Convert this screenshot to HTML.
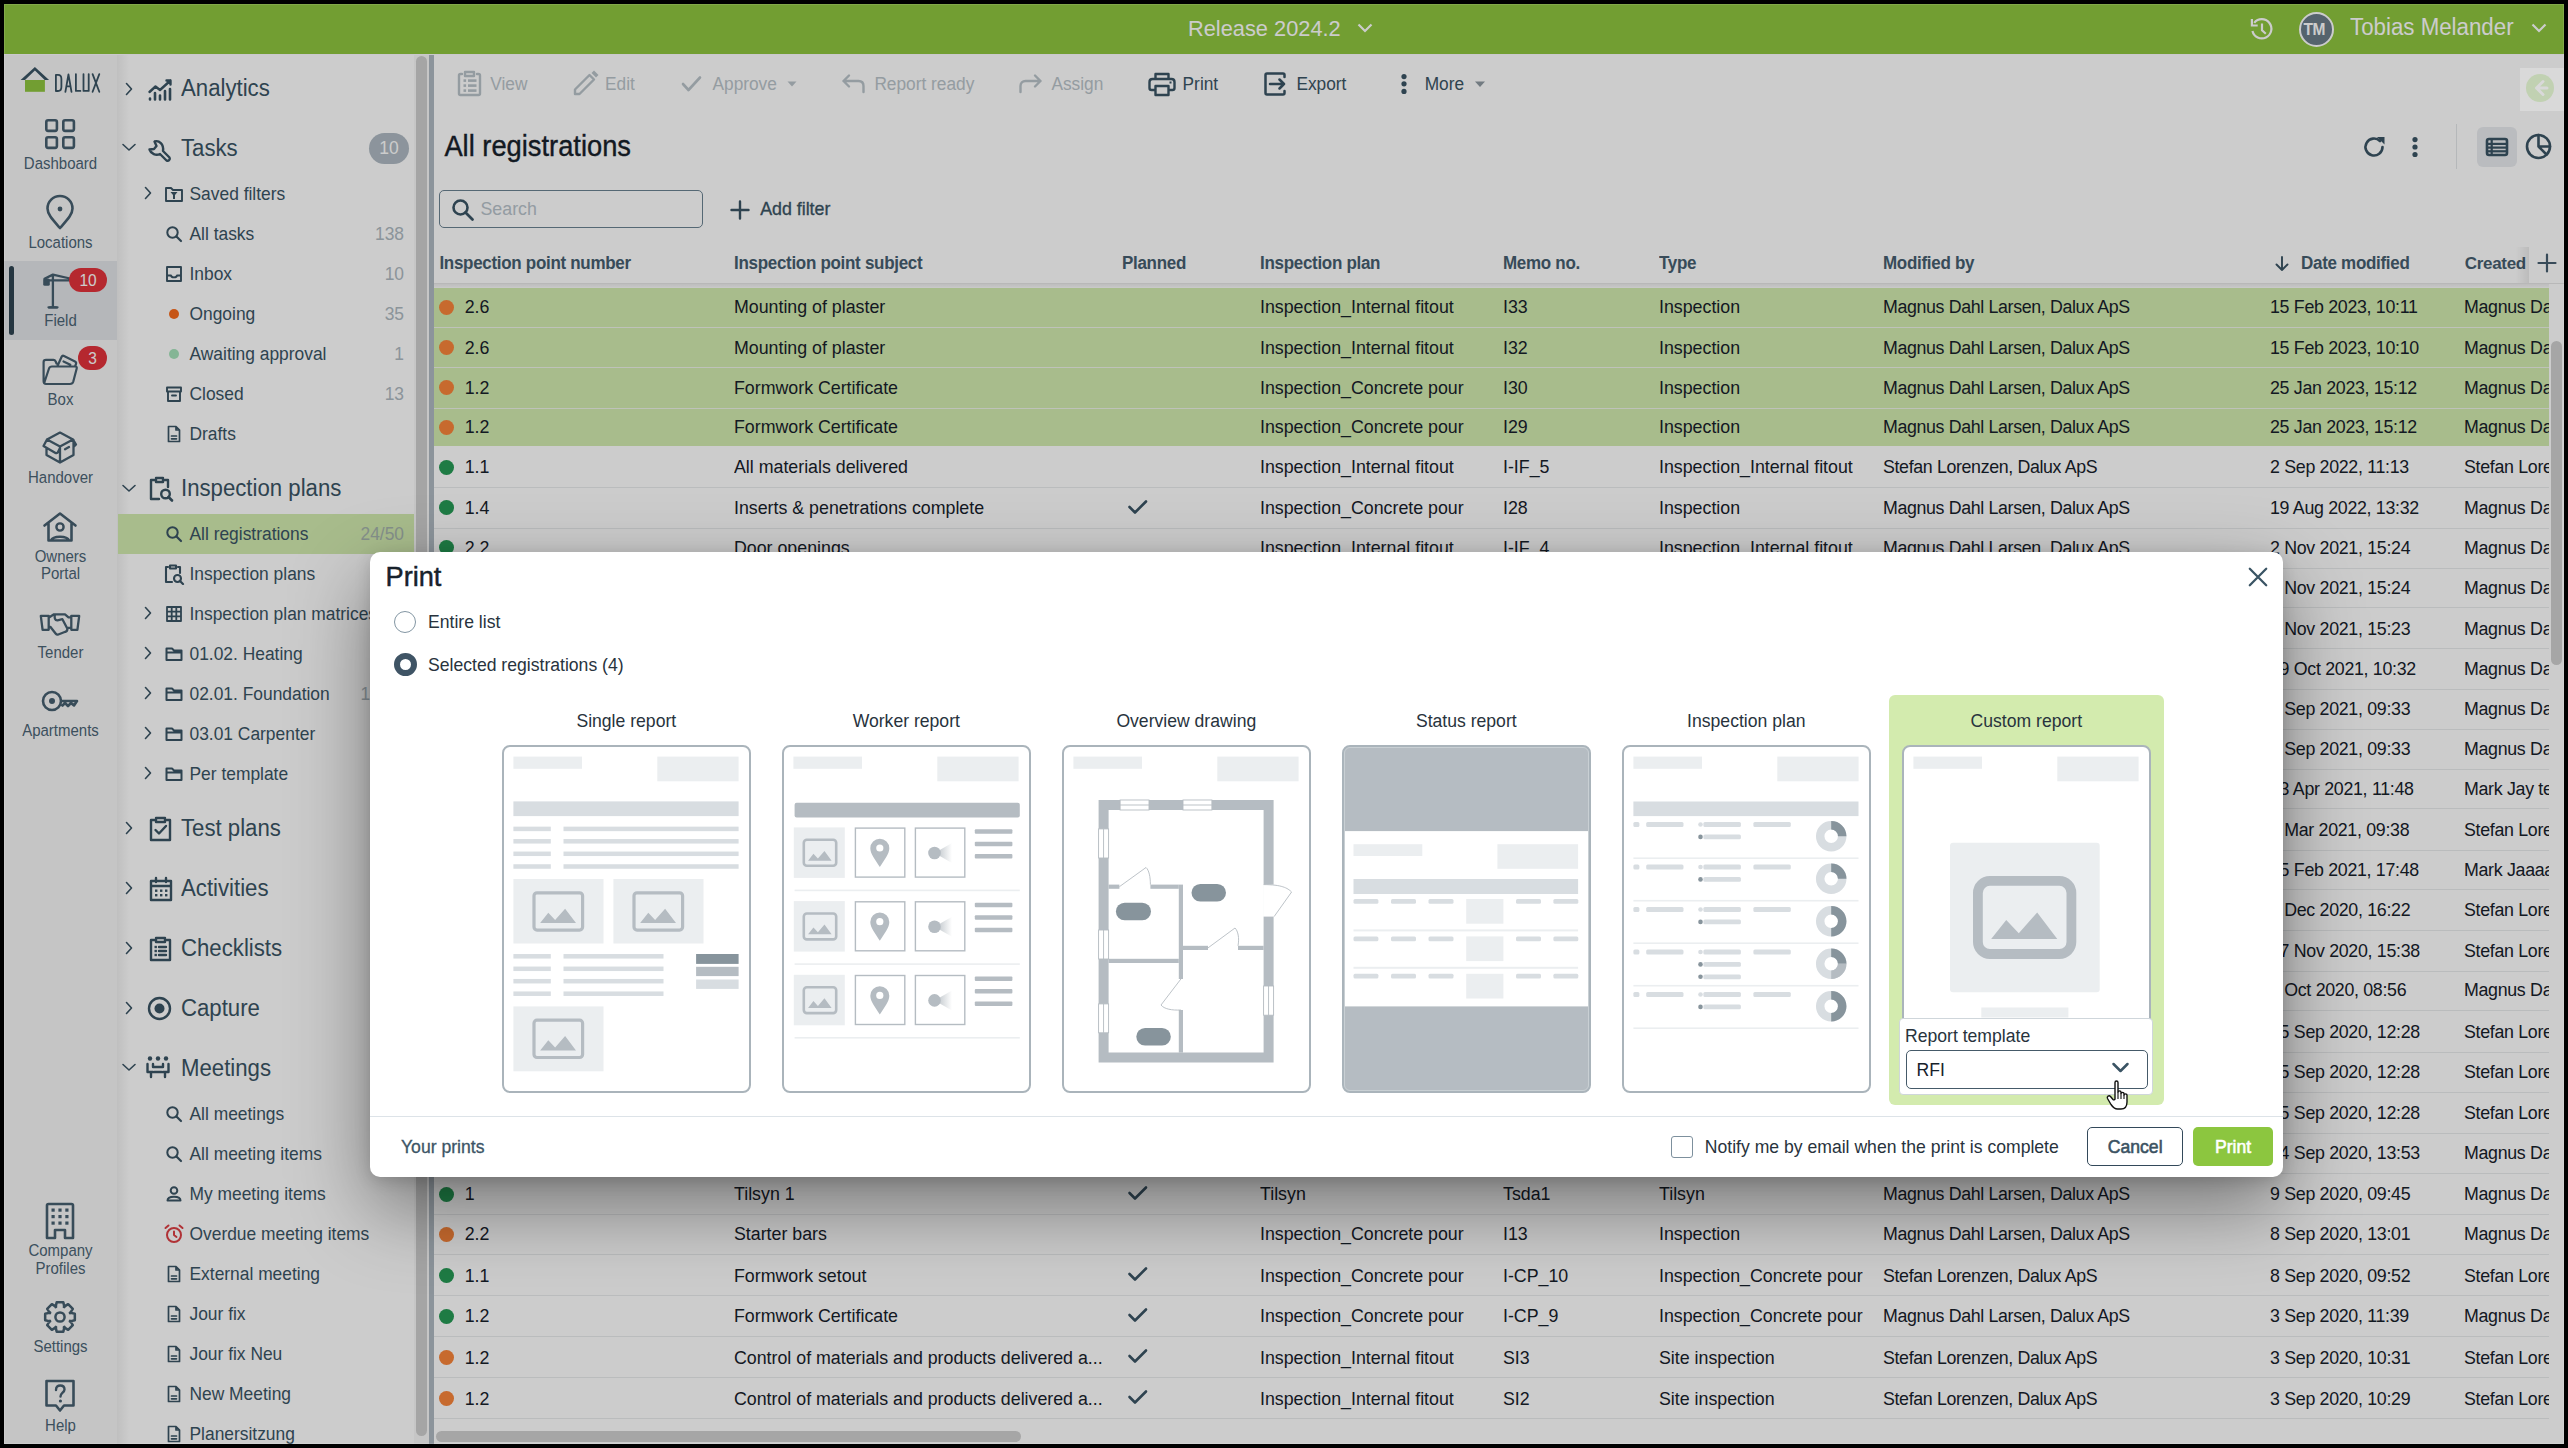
<!DOCTYPE html>
<html><head><meta charset="utf-8"><style>
html,body{margin:0;padding:0;}
body{width:2568px;height:1448px;background:#000;position:relative;overflow:hidden;font-family:"Liberation Sans",sans-serif;}
.t{position:absolute;white-space:nowrap;line-height:1;}
.r{position:absolute;}
#clip{position:absolute;left:4px;top:4px;width:2560px;height:1440px;overflow:hidden;}
</style></head><body>
<div class="r" style="left:4.00px;top:4.00px;width:2560.00px;height:50.00px;background:#8fc63f;"></div>
<div class="r" style="left:4.00px;top:54.00px;width:2560.00px;height:1.00px;background:#fdfcff;"></div>
<div class="t" style="left:1188.00px;top:17.65px;font-size:21.8px;color:#ffffff;transform:scaleY(1.05);transform-origin:0 18.45px;">Release 2024.2</div>
<svg class="r" style="left:1357.00px;top:23.00px;" width="16" height="11" viewBox="0 0 16 11"><path d="M1.5 1.5 L8 8 L14.5 1.5" fill="none" stroke="#fff" stroke-width="2.2"/></svg>
<svg class="r" style="left:2240.00px;top:10.00px;" width="50" height="40" viewBox="0 0 50 40"><path d="M12.45 20.96 A9.6 9.6 0 1 0 14.24 12.89" fill="none" stroke="#fff" stroke-width="2.2"/><path d="M11.9 9.1 V15.5 H17.7" fill="none" stroke="#fff" stroke-width="2.2"/><path d="M22 13.6 V20.2 L25.8 23.7" fill="none" stroke="#fff" stroke-width="2.2"/></svg>
<div class="r" style="left:2299px;top:12px;width:31px;height:31px;border-radius:50%;background:#6b7c89;border:2px solid #fff;"></div>
<div class="t" style="left:2303.50px;top:22.08px;font-size:15.5px;color:#fff;font-weight:700;transform:scaleY(1.05);transform-origin:0 13.12px;letter-spacing:-0.5px;">TM</div>
<div class="t" style="left:2350.00px;top:17.32px;font-size:22.3px;color:#fff;transform:scaleY(1.05);transform-origin:0 18.88px;">Tobias Melander</div>
<svg class="r" style="left:2531.00px;top:23.00px;" width="16" height="11" viewBox="0 0 16 11"><path d="M1.5 1.5 L8 8 L14.5 1.5" fill="none" stroke="#fff" stroke-width="2.2"/></svg>
<div class="r" style="left:4.00px;top:55.00px;width:113.00px;height:1389.00px;background:#f7f7f7;"></div>
<div class="r" style="left:117.00px;top:55.00px;width:297.00px;height:1389.00px;background:#ffffff;"></div>
<div class="r" style="left:117.00px;top:55.00px;width:12.00px;height:1389.00px;background:linear-gradient(to right, rgba(0,0,0,0.06), rgba(0,0,0,0));"></div>
<div class="r" style="left:414.00px;top:55.00px;width:15.00px;height:1389.00px;background:#f8f8f8;"></div>
<div class="r" style="left:416.00px;top:56.00px;width:11.00px;height:1380.00px;background:#cfcfcf;border-radius:6px;"></div>
<div class="r" style="left:429.00px;top:55.00px;width:5.00px;height:1389.00px;background:#afb9c2;"></div>
<div class="r" style="left:434.00px;top:55.00px;width:2130.00px;height:1389.00px;background:#ffffff;"></div>
<svg class="r" style="left:0.00px;top:0.00px;" width="120" height="100" viewBox="0 0 120 100"><path d="M20.6 80 L34.9 67 L49.1 80 H44.7 L34.9 70.6 L25 80 Z" fill="#3a5464"/><rect x="25" y="80" width="19.9" height="11.8" fill="#8fc63f"/><path d="M55.9 74.9 V91 H58 C60.5 91 61.4 89.5 61.4 87 V79 C61.4 76.5 60.5 74.9 58 74.9 Z M65.4 91.8 L68.45 74.3 L71.5 91.8 M66.4 86.4 H70.5 M75.9 74.1 V90.9 H80.4 M83.5 74.1 V90.9 H88.7 V74.1 M92.6 74.1 L99.3 91.8 M99.3 74.1 L92.6 91.8" fill="none" stroke="#3a5464" stroke-width="1.8" stroke-linecap="round" stroke-linejoin="round" stroke-linecap="butt" stroke-linejoin="miter"/></svg>
<svg class="r" style="left:40.00px;top:114.00px;" width="40" height="40" viewBox="0 0 40 40"><rect x="6.3" y="6.3" width="10.6" height="10.6" rx="1.8" fill="none" stroke="#465f70" stroke-width="2.6"/><rect x="6.3" y="23.3" width="10.6" height="10.6" rx="1.8" fill="none" stroke="#465f70" stroke-width="2.6"/><rect x="23.3" y="6.3" width="10.6" height="10.6" rx="1.8" fill="none" stroke="#465f70" stroke-width="2.6"/><rect x="23.3" y="23.3" width="10.6" height="10.6" rx="1.8" fill="none" stroke="#465f70" stroke-width="2.6"/></svg>
<div class="t" style="left:-439.50px;width:1000px;text-align:center;top:155.50px;font-size:15px;color:#4b6475;transform:scaleY(1.05);transform-origin:0 12.70px;">Dashboard</div>
<svg class="r" style="left:40.00px;top:192.00px;" width="40" height="40" viewBox="0 0 40 40"><path d="M20 36 C13 28 7.5 22.5 7.5 16.5 A12.5 12.5 0 0 1 32.5 16.5 C32.5 22.5 27 28 20 36 Z" fill="none" stroke="#465f70" stroke-width="2.6" stroke-linecap="round" stroke-linejoin="round" /><circle cx="20" cy="17" r="2.4" fill="#465f70"/></svg>
<div class="t" style="left:-439.50px;width:1000px;text-align:center;top:235.40px;font-size:15px;color:#4b6475;transform:scaleY(1.05);transform-origin:0 12.70px;">Locations</div>
<div class="r" style="left:4.00px;top:261.00px;width:113.00px;height:79.00px;background:#e3e5e9;"></div>
<div class="r" style="left:9.00px;top:266.00px;width:5.00px;height:69.00px;background:#2f4452;border-radius:3px;"></div>
<svg class="r" style="left:36.00px;top:264.00px;" width="50" height="50" viewBox="0 0 50 50"><path d="M16.9 11 V42.8 M12.5 43.3 H21.5 M9.5 16.3 H34 M8.5 14.8 L16.9 10.6 L34 14.5" fill="none" stroke="#465f70" stroke-width="2.3" stroke-linecap="round" stroke-linejoin="round" stroke-linecap="butt"/><rect x="7.2" y="14.5" width="6.6" height="7.3" rx="1.6" fill="#465f70"/><path d="M12.3 44.6 L13.5 42.3 H20.5 L21.7 44.6 Z" fill="#465f70"/></svg>
<div class="r" style="left:69.00px;top:268.00px;width:38.00px;height:24.00px;background:#e3323b;border-radius:12px;"></div>
<div class="t" style="left:-412.00px;width:1000px;text-align:center;top:273.18px;font-size:15.5px;color:#fff;transform:scaleY(1.05);transform-origin:0 13.12px;">10</div>
<div class="t" style="left:-439.50px;width:1000px;text-align:center;top:313.40px;font-size:15px;color:#4b6475;transform:scaleY(1.05);transform-origin:0 12.70px;">Field</div>
<svg class="r" style="left:36.00px;top:340.00px;" width="50" height="50" viewBox="0 0 50 50"><path d="M8.2 43 L13 28.5 C13.5 27 14.5 26.5 16 26.5 H39.5 C40.5 26.5 41 27.5 40.7 28.5 L37.3 41.5 C36.8 43.2 35.8 44 34 44 H10 C8.5 44 7.6 43 7.6 41 V22 C7.6 20.6 8.5 19.8 10 19.8 H17.5 C18.5 19.8 19.2 20.5 19.7 21.5 L20.5 23.5 M21.5 26 L25.5 17 C26 16 27 15.5 28 16 L39 21.5 C40 22 40.3 23 40 24 L39.2 26 M27.5 21.5 L34.3 24.8" fill="none" stroke="#465f70" stroke-width="2.2" stroke-linecap="round" stroke-linejoin="round" /></svg>
<div class="r" style="left:78.00px;top:346.00px;width:29.00px;height:24.00px;background:#e3323b;border-radius:12px;"></div>
<div class="t" style="left:-407.50px;width:1000px;text-align:center;top:351.18px;font-size:15.5px;color:#fff;transform:scaleY(1.05);transform-origin:0 13.12px;">3</div>
<div class="t" style="left:-439.50px;width:1000px;text-align:center;top:392.40px;font-size:15px;color:#4b6475;transform:scaleY(1.05);transform-origin:0 12.70px;">Box</div>
<svg class="r" style="left:36.00px;top:420.00px;" width="50" height="50" viewBox="0 0 50 50"><path d="M24 12.6 L37 19.5 L24 26.5 L11 19.5 Z M11 19.5 L7.5 26 L19.5 33 C20.5 33.5 21.5 33 22 32 L24 28 M10.5 28.5 V35 L24 42.5 L37.5 35 V20 M37 19.5 L40 24.5 L37.5 27 M24 26.5 V42.5 M29 29.3 L33 27" fill="none" stroke="#465f70" stroke-width="2.3" stroke-linecap="round" stroke-linejoin="round" /></svg>
<div class="t" style="left:-439.50px;width:1000px;text-align:center;top:470.40px;font-size:15px;color:#4b6475;transform:scaleY(1.05);transform-origin:0 12.70px;">Handover</div>
<svg class="r" style="left:40.00px;top:508.00px;" width="40" height="40" viewBox="0 0 40 40"><path d="M4.5 17.5 L20 5.5 L35.5 17.5 M8.5 15 V32.5 H31.5 V15 M11 32.5 C13 27.5 27 27.5 29 32.5" fill="none" stroke="#465f70" stroke-width="2.6" stroke-linecap="round" stroke-linejoin="round" /><circle cx="20" cy="19" r="3.6" fill="none" stroke="#465f70" stroke-width="2.4"/></svg>
<div class="t" style="left:-439.50px;width:1000px;text-align:center;top:549.10px;font-size:15px;color:#4b6475;transform:scaleY(1.05);transform-origin:0 12.70px;">Owners</div>
<div class="t" style="left:-439.50px;width:1000px;text-align:center;top:565.90px;font-size:15px;color:#4b6475;transform:scaleY(1.05);transform-origin:0 12.70px;">Portal</div>
<svg class="r" style="left:36.00px;top:600.00px;" width="50" height="50" viewBox="0 0 50 50"><path d="M4.8 15.8 H12.7 V29.8 H6.6 Z M43.2 15.8 H35.3 V29.8 H41.4 Z M13 17.5 L18 14.3 H29 L32.5 17.3 H35 M18.8 15.5 C18.3 17.5 18.8 20.5 21.5 20.3 L26.4 19.2 L31.3 28.5 C31.6 30 30.8 31.3 29.3 31.8 L22.3 34.5 C21.3 34.9 20.5 34.7 19.8 33.8 L14.3 26.8 H13 M31 27.8 H35" fill="none" stroke="#465f70" stroke-width="2.3" stroke-linecap="round" stroke-linejoin="round" /></svg>
<div class="t" style="left:-439.50px;width:1000px;text-align:center;top:645.20px;font-size:15px;color:#4b6475;transform:scaleY(1.05);transform-origin:0 12.70px;">Tender</div>
<svg class="r" style="left:38.00px;top:686.00px;" width="44" height="30" viewBox="0 0 44 30"><path d="M14 15 m-9 0 a9 9 0 1 0 18 0 a9 9 0 1 0 -18 0 M23 15 H39 L36 19.5 L33 17 L30 20 L27 17 L24.5 19.5" fill="none" stroke="#465f70" stroke-width="2.6" stroke-linecap="round" stroke-linejoin="round" /><circle cx="14" cy="15" r="3" fill="#465f70"/></svg>
<div class="t" style="left:-439.50px;width:1000px;text-align:center;top:723.40px;font-size:15px;color:#4b6475;transform:scaleY(1.05);transform-origin:0 12.70px;">Apartments</div>
<svg class="r" style="left:40.00px;top:1200.00px;" width="40" height="42" viewBox="0 0 40 42"><path d="M7 38 V5.5 C7 4.5 7.5 4 8.5 4 H31.5 C32.5 4 33 4.5 33 5.5 V38 H25 V30 H15 V38 Z" fill="none" stroke="#465f70" stroke-width="2.6" stroke-linecap="round" stroke-linejoin="round" /><rect x="11.5" y="8.5" width="3.2" height="3.2" fill="#465f70"/><rect x="11.5" y="15" width="3.2" height="3.2" fill="#465f70"/><rect x="11.5" y="21.5" width="3.2" height="3.2" fill="#465f70"/><rect x="18.4" y="8.5" width="3.2" height="3.2" fill="#465f70"/><rect x="18.4" y="15" width="3.2" height="3.2" fill="#465f70"/><rect x="18.4" y="21.5" width="3.2" height="3.2" fill="#465f70"/><rect x="25.3" y="8.5" width="3.2" height="3.2" fill="#465f70"/><rect x="25.3" y="15" width="3.2" height="3.2" fill="#465f70"/><rect x="25.3" y="21.5" width="3.2" height="3.2" fill="#465f70"/></svg>
<div class="t" style="left:-439.50px;width:1000px;text-align:center;top:1243.40px;font-size:15px;color:#4b6475;transform:scaleY(1.05);transform-origin:0 12.70px;">Company</div>
<div class="t" style="left:-439.50px;width:1000px;text-align:center;top:1260.90px;font-size:15px;color:#4b6475;transform:scaleY(1.05);transform-origin:0 12.70px;">Profiles</div>
<svg class="r" style="left:40.00px;top:1297.00px;" width="40" height="40" viewBox="0 0 40 40"><path d="M34.83 16.68 L34.83 23.32 L29.86 24.40 L30.09 23.86 L32.83 28.14 L28.14 32.83 L23.86 30.09 L24.40 29.86 L23.32 34.83 L16.68 34.83 L15.60 29.86 L16.14 30.09 L11.86 32.83 L7.17 28.14 L9.91 23.86 L10.14 24.40 L5.17 23.32 L5.17 16.68 L10.14 15.60 L9.91 16.14 L7.17 11.86 L11.86 7.17 L16.14 9.91 L15.60 10.14 L16.68 5.17 L23.32 5.17 L24.40 10.14 L23.86 9.91 L28.14 7.17 L32.83 11.86 L30.09 16.14 L29.86 15.60 Z" fill="none" stroke="#465f70" stroke-width="2.5" stroke-linecap="round" stroke-linejoin="round" /><circle cx="20" cy="20" r="4.6" fill="none" stroke="#465f70" stroke-width="2.5"/></svg>
<div class="t" style="left:-439.50px;width:1000px;text-align:center;top:1339.20px;font-size:15px;color:#4b6475;transform:scaleY(1.05);transform-origin:0 12.70px;">Settings</div>
<svg class="r" style="left:40.00px;top:1376.00px;" width="40" height="40" viewBox="0 0 40 40"><path d="M6.5 5 H33.5 V29.5 H24 L20 34.5 L16 29.5 H6.5 Z" fill="none" stroke="#465f70" stroke-width="2.6" stroke-linecap="round" stroke-linejoin="round" /><path d="M16 14 C16 10.5 18 9.5 20.2 9.5 C22.8 9.5 24.5 11.2 24.5 13.5 C24.5 16.5 20.5 17 20.5 20.5" fill="none" stroke="#465f70" stroke-width="2.4" stroke-linecap="round" stroke-linejoin="round" /><circle cx="20.4" cy="25" r="1.6" fill="#465f70"/></svg>
<div class="t" style="left:-439.50px;width:1000px;text-align:center;top:1418.40px;font-size:15px;color:#4b6475;transform:scaleY(1.05);transform-origin:0 12.70px;">Help</div>
<svg class="r" style="left:123.00px;top:80.50px;" width="12" height="16" viewBox="0 0 12 16"><path d="M3.5 2.5 L8.5 8 L3.5 13.5" fill="none" stroke="#3a5464" stroke-width="1.6" stroke-linecap="round" stroke-linejoin="round" /></svg>
<svg class="r" style="left:146.00px;top:78.00px;" width="28" height="24" viewBox="0 0 28 24"><path d="M3.5 14 L9.5 8.5 L14 12 L24.5 2.5 M20.5 2.5 H24.5 V6.5" fill="none" stroke="#3a5464" stroke-width="2.4" stroke-linecap="round" stroke-linejoin="round" /><path d="M4 21.5 V20.5 M9 21.5 V15 M14 21.5 V17.5 M19 21.5 V13 M24 21.5 V11" fill="none" stroke="#3a5464" stroke-width="2.6" stroke-linecap="round" stroke-linejoin="round" stroke-linecap="butt"/></svg>
<div class="t" style="left:181.00px;top:78.41px;font-size:22.2px;color:#3a5464;transform:scaleY(1.05);transform-origin:0 18.79px;">Analytics</div>
<svg class="r" style="left:120.50px;top:142.00px;" width="16" height="10" viewBox="0 0 16 10"><path d="M2 2.5 L8 8 L14 2.5" fill="none" stroke="#3a5464" stroke-width="1.6" stroke-linecap="round" stroke-linejoin="round" /></svg>
<svg class="r" style="left:146.00px;top:135.00px;" width="28" height="28" viewBox="0 0 28 28"><path d="M17 16 L23.5 22.5 A2.2 2.2 0 0 1 20.5 25.5 L14 19 C10 21 5 19 3.5 14.5 L8 14 L10.5 11 L8.5 6.5 C13 5 18 9 17 16 Z" fill="none" stroke="#3a5464" stroke-width="2.4" stroke-linecap="round" stroke-linejoin="round" /></svg>
<div class="t" style="left:181.00px;top:137.81px;font-size:22.2px;color:#3a5464;transform:scaleY(1.05);transform-origin:0 18.79px;">Tasks</div>
<div class="r" style="left:369.00px;top:133.00px;width:40.00px;height:31.00px;background:#afbac3;border-radius:16px;"></div>
<div class="t" style="left:-111.00px;width:1000px;text-align:center;top:140.39px;font-size:17.5px;color:#fff;transform:scaleY(1.05);transform-origin:0 14.81px;">10</div>
<svg class="r" style="left:141.50px;top:185.30px;" width="12" height="16" viewBox="0 0 12 16"><path d="M3.5 2.5 L8.5 8 L3.5 13.5" fill="none" stroke="#3a5464" stroke-width="1.6" stroke-linecap="round" stroke-linejoin="round" /></svg>
<svg class="r" style="left:163.00px;top:184.80px;" width="22" height="18" viewBox="0 0 22 18"><path d="M3 3 H8 L10 5 H19 V16 H3 Z" fill="none" stroke="#3a5464" stroke-width="1.9" stroke-linecap="round" stroke-linejoin="round" /><path d="M7.5 7 H14.5 L12 10 V14 H10 V10 Z" fill="#3a5464"/></svg>
<div class="t" style="left:189.50px;top:185.97px;font-size:17.4px;color:#3a5464;transform:scaleY(1.05);transform-origin:0 14.73px;">Saved filters</div>
<svg class="r" style="left:164.00px;top:224.80px;" width="20" height="18" viewBox="0 0 20 18"><circle cx="8.5" cy="7.5" r="5.2" fill="none" stroke="#3a5464" stroke-width="2.0"/><path d="M12.5 11.5 L17 16" fill="none" stroke="#3a5464" stroke-width="2.2" stroke-linecap="round" stroke-linejoin="round" /></svg>
<div class="t" style="left:189.50px;top:225.97px;font-size:17.4px;color:#3a5464;transform:scaleY(1.05);transform-origin:0 14.73px;">All tasks</div>
<div class="t" style="right:2164.00px;top:225.97px;font-size:17.4px;color:#aeb9c1;transform:scaleY(1.05);transform-origin:0 14.73px;">138</div>
<svg class="r" style="left:164.00px;top:264.80px;" width="20" height="18" viewBox="0 0 20 18"><path d="M3 2 H17 V16 H3 Z M3 10.5 H7 C7.5 13 12.5 13 13 10.5 H17" fill="none" stroke="#3a5464" stroke-width="1.9" stroke-linecap="round" stroke-linejoin="round" stroke-linejoin="round"/></svg>
<div class="t" style="left:189.50px;top:265.97px;font-size:17.4px;color:#3a5464;transform:scaleY(1.05);transform-origin:0 14.73px;">Inbox</div>
<div class="t" style="right:2164.00px;top:265.97px;font-size:17.4px;color:#aeb9c1;transform:scaleY(1.05);transform-origin:0 14.73px;">10</div>
<div class="r" style="left:168.8px;top:308.7px;width:10.4px;height:10.4px;border-radius:50%;background:#f86b1c;"></div>
<div class="t" style="left:189.50px;top:305.97px;font-size:17.4px;color:#3a5464;transform:scaleY(1.05);transform-origin:0 14.73px;">Ongoing</div>
<div class="t" style="right:2164.00px;top:305.97px;font-size:17.4px;color:#aeb9c1;transform:scaleY(1.05);transform-origin:0 14.73px;">35</div>
<div class="r" style="left:168.8px;top:348.7px;width:10.4px;height:10.4px;border-radius:50%;background:#a5e3bb;"></div>
<div class="t" style="left:189.50px;top:345.97px;font-size:17.4px;color:#3a5464;transform:scaleY(1.05);transform-origin:0 14.73px;">Awaiting approval</div>
<div class="t" style="right:2164.00px;top:345.97px;font-size:17.4px;color:#aeb9c1;transform:scaleY(1.05);transform-origin:0 14.73px;">1</div>
<svg class="r" style="left:164.00px;top:384.80px;" width="20" height="18" viewBox="0 0 20 18"><path d="M3 2.5 H17 V6.5 H3 Z M4 6.5 V16 H16 V6.5 M8 10.5 H12" fill="none" stroke="#3a5464" stroke-width="1.9" stroke-linecap="round" stroke-linejoin="round" /></svg>
<div class="t" style="left:189.50px;top:385.97px;font-size:17.4px;color:#3a5464;transform:scaleY(1.05);transform-origin:0 14.73px;">Closed</div>
<div class="t" style="right:2164.00px;top:385.97px;font-size:17.4px;color:#aeb9c1;transform:scaleY(1.05);transform-origin:0 14.73px;">13</div>
<svg class="r" style="left:164.00px;top:423.80px;" width="20" height="20" viewBox="0 0 20 20"><path d="M4.5 2.5 H12 L15.5 6 V17.5 H4.5 Z M12 2.5 V6 H15.5 M7.5 12 H12.5 M7.5 14.8 H12.5" fill="none" stroke="#3a5464" stroke-width="1.7" stroke-linecap="round" stroke-linejoin="round" /></svg>
<div class="t" style="left:189.50px;top:425.97px;font-size:17.4px;color:#3a5464;transform:scaleY(1.05);transform-origin:0 14.73px;">Drafts</div>
<svg class="r" style="left:120.50px;top:483.00px;" width="16" height="10" viewBox="0 0 16 10"><path d="M2 2.5 L8 8 L14 2.5" fill="none" stroke="#3a5464" stroke-width="1.6" stroke-linecap="round" stroke-linejoin="round" /></svg>
<svg class="r" style="left:146.00px;top:475.00px;" width="30" height="28" viewBox="0 0 30 28"><path d="M8 5 H5 V24 H13 M19 5 H22 V12 M10 3 H17 V7 H10 Z" fill="none" stroke="#3a5464" stroke-width="2.4" stroke-linecap="round" stroke-linejoin="round" stroke-linejoin="miter"/><circle cx="19.5" cy="19" r="4.3" fill="none" stroke="#3a5464" stroke-width="2.4"/><path d="M22.5 22 L26 25.5" fill="none" stroke="#3a5464" stroke-width="2.6" stroke-linecap="round" stroke-linejoin="round" /></svg>
<div class="t" style="left:181.00px;top:478.11px;font-size:22.2px;color:#3a5464;transform:scaleY(1.05);transform-origin:0 18.79px;">Inspection plans</div>
<div class="r" style="left:117.50px;top:514.00px;width:296.50px;height:39.70px;background:#d3ebb0;"></div>
<svg class="r" style="left:164.00px;top:524.80px;" width="20" height="18" viewBox="0 0 20 18"><circle cx="8.5" cy="7.5" r="5.2" fill="none" stroke="#3a5464" stroke-width="2.0"/><path d="M12.5 11.5 L17 16" fill="none" stroke="#3a5464" stroke-width="2.2" stroke-linecap="round" stroke-linejoin="round" /></svg>
<div class="t" style="left:189.50px;top:525.97px;font-size:17.4px;color:#3a5464;transform:scaleY(1.05);transform-origin:0 14.73px;">All registrations</div>
<div class="t" style="right:2164.00px;top:525.97px;font-size:17.4px;color:#a6b5ad;transform:scaleY(1.05);transform-origin:0 14.73px;">24/50</div>
<svg class="r" style="left:162.00px;top:562.80px;" width="24" height="22" viewBox="0 0 24 22"><path d="M6 4 H4 V19 H10 M16 4 H18 V10 M8 2.5 H14 V5.5 H8 Z" fill="none" stroke="#3a5464" stroke-width="2.1" stroke-linecap="round" stroke-linejoin="round" stroke-linejoin="miter"/><circle cx="15.5" cy="15.5" r="3.5" fill="none" stroke="#3a5464" stroke-width="2.1"/><path d="M18 18 L21 21" fill="none" stroke="#3a5464" stroke-width="2.2" stroke-linecap="round" stroke-linejoin="round" /></svg>
<div class="t" style="left:189.50px;top:565.97px;font-size:17.4px;color:#3a5464;transform:scaleY(1.05);transform-origin:0 14.73px;">Inspection plans</div>
<svg class="r" style="left:141.50px;top:605.30px;" width="12" height="16" viewBox="0 0 12 16"><path d="M3.5 2.5 L8.5 8 L3.5 13.5" fill="none" stroke="#3a5464" stroke-width="1.6" stroke-linecap="round" stroke-linejoin="round" /></svg>
<svg class="r" style="left:164.00px;top:603.80px;" width="20" height="20" viewBox="0 0 20 20"><path d="M3 3 H17 V17 H3 Z M3 7.7 H17 M3 12.3 H17 M7.7 3 V17 M12.3 3 V17" fill="none" stroke="#3a5464" stroke-width="1.8" stroke-linecap="round" stroke-linejoin="round" stroke-linejoin="miter"/></svg>
<div class="t" style="left:189.50px;top:605.97px;font-size:17.4px;color:#3a5464;transform:scaleY(1.05);transform-origin:0 14.73px;">Inspection plan matrices</div>
<svg class="r" style="left:141.50px;top:645.30px;" width="12" height="16" viewBox="0 0 12 16"><path d="M3.5 2.5 L8.5 8 L3.5 13.5" fill="none" stroke="#3a5464" stroke-width="1.6" stroke-linecap="round" stroke-linejoin="round" /></svg>
<svg class="r" style="left:164.00px;top:643.80px;" width="20" height="20" viewBox="0 0 20 20"><path d="M2.5 4.5 H8 L10 6.5 H17.5 V16 H2.5 Z M2.5 8.5 H17.5" fill="none" stroke="#3a5464" stroke-width="2.0" stroke-linecap="round" stroke-linejoin="round" stroke-linejoin="round"/></svg>
<div class="t" style="left:189.50px;top:645.97px;font-size:17.4px;color:#3a5464;transform:scaleY(1.05);transform-origin:0 14.73px;">01.02. Heating</div>
<svg class="r" style="left:141.50px;top:685.30px;" width="12" height="16" viewBox="0 0 12 16"><path d="M3.5 2.5 L8.5 8 L3.5 13.5" fill="none" stroke="#3a5464" stroke-width="1.6" stroke-linecap="round" stroke-linejoin="round" /></svg>
<svg class="r" style="left:164.00px;top:683.80px;" width="20" height="20" viewBox="0 0 20 20"><path d="M2.5 4.5 H8 L10 6.5 H17.5 V16 H2.5 Z M2.5 8.5 H17.5" fill="none" stroke="#3a5464" stroke-width="2.0" stroke-linecap="round" stroke-linejoin="round" stroke-linejoin="round"/></svg>
<div class="t" style="left:189.50px;top:685.97px;font-size:17.4px;color:#3a5464;transform:scaleY(1.05);transform-origin:0 14.73px;">02.01. Foundation</div>
<div class="t" style="right:2164.00px;top:685.97px;font-size:17.4px;color:#aeb9c1;transform:scaleY(1.05);transform-origin:0 14.73px;">16/50</div>
<svg class="r" style="left:141.50px;top:725.30px;" width="12" height="16" viewBox="0 0 12 16"><path d="M3.5 2.5 L8.5 8 L3.5 13.5" fill="none" stroke="#3a5464" stroke-width="1.6" stroke-linecap="round" stroke-linejoin="round" /></svg>
<svg class="r" style="left:164.00px;top:723.80px;" width="20" height="20" viewBox="0 0 20 20"><path d="M2.5 4.5 H8 L10 6.5 H17.5 V16 H2.5 Z M2.5 8.5 H17.5" fill="none" stroke="#3a5464" stroke-width="2.0" stroke-linecap="round" stroke-linejoin="round" stroke-linejoin="round"/></svg>
<div class="t" style="left:189.50px;top:725.97px;font-size:17.4px;color:#3a5464;transform:scaleY(1.05);transform-origin:0 14.73px;">03.01 Carpenter</div>
<div class="t" style="right:2164.00px;top:725.97px;font-size:17.4px;color:#aeb9c1;transform:scaleY(1.05);transform-origin:0 14.73px;">7/12</div>
<svg class="r" style="left:141.50px;top:765.30px;" width="12" height="16" viewBox="0 0 12 16"><path d="M3.5 2.5 L8.5 8 L3.5 13.5" fill="none" stroke="#3a5464" stroke-width="1.6" stroke-linecap="round" stroke-linejoin="round" /></svg>
<svg class="r" style="left:164.00px;top:763.80px;" width="20" height="20" viewBox="0 0 20 20"><path d="M2.5 4.5 H8 L10 6.5 H17.5 V16 H2.5 Z M2.5 8.5 H17.5" fill="none" stroke="#3a5464" stroke-width="2.0" stroke-linecap="round" stroke-linejoin="round" stroke-linejoin="round"/></svg>
<div class="t" style="left:189.50px;top:765.97px;font-size:17.4px;color:#3a5464;transform:scaleY(1.05);transform-origin:0 14.73px;">Per template</div>
<svg class="r" style="left:123.00px;top:820.00px;" width="12" height="16" viewBox="0 0 12 16"><path d="M3.5 2.5 L8.5 8 L3.5 13.5" fill="none" stroke="#3a5464" stroke-width="1.6" stroke-linecap="round" stroke-linejoin="round" /></svg>
<svg class="r" style="left:146.00px;top:814.00px;" width="30" height="30" viewBox="0 0 30 30"><path d="M8 6 H5 V26 H24 V6 H21 M10 4 H19 V8 H10 Z" fill="none" stroke="#3a5464" stroke-width="2.4" stroke-linecap="round" stroke-linejoin="round" stroke-linejoin="miter"/><path d="M9.5 16 L13 19.5 L20 12" fill="none" stroke="#3a5464" stroke-width="2.4" stroke-linecap="round" stroke-linejoin="round" /></svg>
<div class="t" style="left:181.00px;top:818.01px;font-size:22.2px;color:#3a5464;transform:scaleY(1.05);transform-origin:0 18.79px;">Test plans</div>
<svg class="r" style="left:123.00px;top:880.00px;" width="12" height="16" viewBox="0 0 12 16"><path d="M3.5 2.5 L8.5 8 L3.5 13.5" fill="none" stroke="#3a5464" stroke-width="1.6" stroke-linecap="round" stroke-linejoin="round" /></svg>
<svg class="r" style="left:146.00px;top:874.00px;" width="30" height="30" viewBox="0 0 30 30"><path d="M5 7 H25 V26 H5 Z M5 12 H25 M10 4 V8 M20 4 V8" fill="none" stroke="#3a5464" stroke-width="2.4" stroke-linecap="round" stroke-linejoin="round" stroke-linejoin="miter"/><rect x="9" y="15.5" width="2.4" height="2.4" fill="#3a5464"/><rect x="9" y="20" width="2.4" height="2.4" fill="#3a5464"/><rect x="14" y="15.5" width="2.4" height="2.4" fill="#3a5464"/><rect x="14" y="20" width="2.4" height="2.4" fill="#3a5464"/><rect x="19" y="15.5" width="2.4" height="2.4" fill="#3a5464"/><rect x="19" y="20" width="2.4" height="2.4" fill="#3a5464"/></svg>
<div class="t" style="left:181.00px;top:878.21px;font-size:22.2px;color:#3a5464;transform:scaleY(1.05);transform-origin:0 18.79px;">Activities</div>
<svg class="r" style="left:123.00px;top:940.00px;" width="12" height="16" viewBox="0 0 12 16"><path d="M3.5 2.5 L8.5 8 L3.5 13.5" fill="none" stroke="#3a5464" stroke-width="1.6" stroke-linecap="round" stroke-linejoin="round" /></svg>
<svg class="r" style="left:146.00px;top:934.00px;" width="30" height="30" viewBox="0 0 30 30"><path d="M8 6 H5 V26 H24 V6 H21 M10 4 H19 V8 H10 Z M13 13 H20 M13 17 H20 M13 21 H20" fill="none" stroke="#3a5464" stroke-width="2.4" stroke-linecap="round" stroke-linejoin="round" stroke-linejoin="miter"/><rect x="8.5" y="11.8" width="2.4" height="2.4" fill="#3a5464"/><rect x="8.5" y="15.8" width="2.4" height="2.4" fill="#3a5464"/><rect x="8.5" y="19.8" width="2.4" height="2.4" fill="#3a5464"/></svg>
<div class="t" style="left:181.00px;top:938.21px;font-size:22.2px;color:#3a5464;transform:scaleY(1.05);transform-origin:0 18.79px;">Checklists</div>
<svg class="r" style="left:123.00px;top:1000.00px;" width="12" height="16" viewBox="0 0 12 16"><path d="M3.5 2.5 L8.5 8 L3.5 13.5" fill="none" stroke="#3a5464" stroke-width="1.6" stroke-linecap="round" stroke-linejoin="round" /></svg>
<svg class="r" style="left:146.00px;top:994.00px;" width="30" height="30" viewBox="0 0 30 30"><circle cx="13.5" cy="14.5" r="10.5" fill="none" stroke="#3a5464" stroke-width="2.4"/><circle cx="13.5" cy="14.5" r="5" fill="#3a5464"/></svg>
<div class="t" style="left:181.00px;top:998.31px;font-size:22.2px;color:#3a5464;transform:scaleY(1.05);transform-origin:0 18.79px;">Capture</div>
<svg class="r" style="left:120.50px;top:1062.00px;" width="16" height="10" viewBox="0 0 16 10"><path d="M2 2.5 L8 8 L14 2.5" fill="none" stroke="#3a5464" stroke-width="1.6" stroke-linecap="round" stroke-linejoin="round" /></svg>
<svg class="r" style="left:144.00px;top:1054.00px;" width="30" height="28" viewBox="0 0 30 28"><circle cx="6" cy="4.5" r="2.2" fill="#3a5464"/><circle cx="14" cy="4.5" r="2.2" fill="#3a5464"/><circle cx="22" cy="4.5" r="2.2" fill="#3a5464"/><path d="M3.5 10 V18 H9 M9 10 V13 H19 V10 M24.5 10 V18 H19 M7 18 V23 M21 18 V23 M10.5 18 H17.5" fill="none" stroke="#3a5464" stroke-width="2.4" stroke-linecap="round" stroke-linejoin="round" stroke-linejoin="round"/></svg>
<div class="t" style="left:181.00px;top:1058.01px;font-size:22.2px;color:#3a5464;transform:scaleY(1.05);transform-origin:0 18.79px;">Meetings</div>
<svg class="r" style="left:164.00px;top:1104.80px;" width="20" height="18" viewBox="0 0 20 18"><circle cx="8.5" cy="7.5" r="5.2" fill="none" stroke="#3a5464" stroke-width="2.0"/><path d="M12.5 11.5 L17 16" fill="none" stroke="#3a5464" stroke-width="2.2" stroke-linecap="round" stroke-linejoin="round" /></svg>
<div class="t" style="left:189.50px;top:1105.97px;font-size:17.4px;color:#3a5464;transform:scaleY(1.05);transform-origin:0 14.73px;">All meetings</div>
<svg class="r" style="left:164.00px;top:1144.80px;" width="20" height="18" viewBox="0 0 20 18"><circle cx="8.5" cy="7.5" r="5.2" fill="none" stroke="#3a5464" stroke-width="2.0"/><path d="M12.5 11.5 L17 16" fill="none" stroke="#3a5464" stroke-width="2.2" stroke-linecap="round" stroke-linejoin="round" /></svg>
<div class="t" style="left:189.50px;top:1145.97px;font-size:17.4px;color:#3a5464;transform:scaleY(1.05);transform-origin:0 14.73px;">All meeting items</div>
<svg class="r" style="left:164.00px;top:1183.80px;" width="20" height="20" viewBox="0 0 20 20"><circle cx="10" cy="6.5" r="3.3" fill="none" stroke="#3a5464" stroke-width="2"/><path d="M3.5 16.5 C3.5 11.5 16.5 11.5 16.5 16.5 Z" fill="none" stroke="#3a5464" stroke-width="2.0" stroke-linecap="round" stroke-linejoin="round" /></svg>
<div class="t" style="left:189.50px;top:1185.97px;font-size:17.4px;color:#3a5464;transform:scaleY(1.05);transform-origin:0 14.73px;">My meeting items</div>
<svg class="r" style="left:163.00px;top:1222.80px;" width="22" height="22" viewBox="0 0 22 22"><circle cx="11" cy="12" r="7" fill="none" stroke="#dd3f44" stroke-width="2"/><path d="M11 8.5 V12 L13.5 14 M2.5 5 L5.5 2.5 M19.5 5 L16.5 2.5" fill="none" stroke="#dd3f44" stroke-width="2.0" stroke-linecap="round" stroke-linejoin="round" /></svg>
<div class="t" style="left:189.50px;top:1225.97px;font-size:17.4px;color:#3a5464;transform:scaleY(1.05);transform-origin:0 14.73px;">Overdue meeting items</div>
<svg class="r" style="left:164.00px;top:1263.80px;" width="20" height="20" viewBox="0 0 20 20"><path d="M4.5 2.5 H12 L15.5 6 V17.5 H4.5 Z M12 2.5 V6 H15.5 M7.5 12 H12.5 M7.5 14.8 H12.5" fill="none" stroke="#3a5464" stroke-width="1.7" stroke-linecap="round" stroke-linejoin="round" /></svg>
<div class="t" style="left:189.50px;top:1265.97px;font-size:17.4px;color:#3a5464;transform:scaleY(1.05);transform-origin:0 14.73px;">External meeting</div>
<svg class="r" style="left:164.00px;top:1303.80px;" width="20" height="20" viewBox="0 0 20 20"><path d="M4.5 2.5 H12 L15.5 6 V17.5 H4.5 Z M12 2.5 V6 H15.5 M7.5 12 H12.5 M7.5 14.8 H12.5" fill="none" stroke="#3a5464" stroke-width="1.7" stroke-linecap="round" stroke-linejoin="round" /></svg>
<div class="t" style="left:189.50px;top:1305.97px;font-size:17.4px;color:#3a5464;transform:scaleY(1.05);transform-origin:0 14.73px;">Jour fix</div>
<svg class="r" style="left:164.00px;top:1343.80px;" width="20" height="20" viewBox="0 0 20 20"><path d="M4.5 2.5 H12 L15.5 6 V17.5 H4.5 Z M12 2.5 V6 H15.5 M7.5 12 H12.5 M7.5 14.8 H12.5" fill="none" stroke="#3a5464" stroke-width="1.7" stroke-linecap="round" stroke-linejoin="round" /></svg>
<div class="t" style="left:189.50px;top:1345.97px;font-size:17.4px;color:#3a5464;transform:scaleY(1.05);transform-origin:0 14.73px;">Jour fix Neu</div>
<svg class="r" style="left:164.00px;top:1383.80px;" width="20" height="20" viewBox="0 0 20 20"><path d="M4.5 2.5 H12 L15.5 6 V17.5 H4.5 Z M12 2.5 V6 H15.5 M7.5 12 H12.5 M7.5 14.8 H12.5" fill="none" stroke="#3a5464" stroke-width="1.7" stroke-linecap="round" stroke-linejoin="round" /></svg>
<div class="t" style="left:189.50px;top:1385.97px;font-size:17.4px;color:#3a5464;transform:scaleY(1.05);transform-origin:0 14.73px;">New Meeting</div>
<svg class="r" style="left:164.00px;top:1423.80px;" width="20" height="20" viewBox="0 0 20 20"><path d="M4.5 2.5 H12 L15.5 6 V17.5 H4.5 Z M12 2.5 V6 H15.5 M7.5 12 H12.5 M7.5 14.8 H12.5" fill="none" stroke="#3a5464" stroke-width="1.7" stroke-linecap="round" stroke-linejoin="round" /></svg>
<div class="t" style="left:189.50px;top:1425.97px;font-size:17.4px;color:#3a5464;transform:scaleY(1.05);transform-origin:0 14.73px;">Planersitzung</div>
<svg class="r" style="left:456.00px;top:68.00px;" width="28" height="30" viewBox="0 0 28 30"><path d="M6 6 H4.5 C3.5 6 3 6.5 3 7.5 V25.5 C3 26.5 3.5 27 4.5 27 H22.5 C23.5 27 24 26.5 24 25.5 V7.5 C24 6.5 23.5 6 22.5 6 H21 M9 4 H18 V8 H9 Z" fill="none" stroke="#bac4ca" stroke-width="2.4" stroke-linecap="round" stroke-linejoin="round" /><rect x="7.5" y="11.3" width="2.6" height="2.6" fill="#bac4ca"/><rect x="12" y="11.3" width="8.5" height="2.6" fill="#bac4ca"/><rect x="7.5" y="16.3" width="2.6" height="2.6" fill="#bac4ca"/><rect x="12" y="16.3" width="8.5" height="2.6" fill="#bac4ca"/><rect x="7.5" y="21.3" width="2.6" height="2.6" fill="#bac4ca"/><rect x="12" y="21.3" width="8.5" height="2.6" fill="#bac4ca"/></svg>
<div class="t" style="left:490.30px;top:76.36px;font-size:17.3px;color:#bac4ca;transform:scaleY(1.05);transform-origin:0 14.64px;">View</div>
<svg class="r" style="left:570.00px;top:68.00px;" width="30" height="30" viewBox="0 0 30 30"><path d="M5 26 L5 21.5 L19.5 7 L24 11.5 L9.5 26 Z" fill="none" stroke="#bac4ca" stroke-width="2.4" stroke-linecap="round" stroke-linejoin="round" stroke-linejoin="miter"/><path d="M21.5 5 L24 2.5 L28.5 7 L26 9.5 Z" fill="#bac4ca"/></svg>
<div class="t" style="left:605.00px;top:76.36px;font-size:17.3px;color:#bac4ca;transform:scaleY(1.05);transform-origin:0 14.64px;">Edit</div>
<svg class="r" style="left:678.00px;top:70.00px;" width="28" height="26" viewBox="0 0 28 26"><path d="M5 14 L10.5 20 L22 7.5" fill="none" stroke="#bac4ca" stroke-width="2.6" stroke-linecap="round" stroke-linejoin="round" /></svg>
<div class="t" style="left:712.50px;top:76.36px;font-size:17.3px;color:#bac4ca;transform:scaleY(1.05);transform-origin:0 14.64px;">Approve</div>
<svg class="r" style="left:786.00px;top:80.00px;" width="12" height="8" viewBox="0 0 12 8"><path d="M1.5 1.5 H10.5 L6 6.5 Z" fill="#bac4ca"/></svg>
<svg class="r" style="left:840.00px;top:72.00px;" width="28" height="24" viewBox="0 0 28 24"><path d="M9 3.5 L3.5 9 L9 14.5 M3.5 9 H18.5 C21.5 9 23.5 11 23.5 14 V20" fill="none" stroke="#bac4ca" stroke-width="2.4" stroke-linecap="round" stroke-linejoin="round" /></svg>
<div class="t" style="left:874.40px;top:76.36px;font-size:17.3px;color:#bac4ca;transform:scaleY(1.05);transform-origin:0 14.64px;">Report ready</div>
<svg class="r" style="left:1016.00px;top:72.00px;" width="28" height="24" viewBox="0 0 28 24"><path d="M19 3.5 L24.5 9 L19 14.5 M24.5 9 H9.5 C6.5 9 4.5 11 4.5 14 V20" fill="none" stroke="#bac4ca" stroke-width="2.4" stroke-linecap="round" stroke-linejoin="round" /></svg>
<div class="t" style="left:1051.40px;top:76.36px;font-size:17.3px;color:#bac4ca;transform:scaleY(1.05);transform-origin:0 14.64px;">Assign</div>
<svg class="r" style="left:1146.00px;top:70.00px;" width="32" height="28" viewBox="0 0 32 28"><path d="M9.5 9 V4 H22.5 V9 M9.5 20 H5.5 C4 20 3.5 19.5 3.5 18 V12 C3.5 10 4.5 9 6.5 9 H25.5 C27.5 9 28.5 10 28.5 12 V18 C28.5 19.5 28 20 26.5 20 H22.5 M9.5 16 H22.5 V25 H9.5 Z" fill="none" stroke="#3a5464" stroke-width="2.4" stroke-linecap="round" stroke-linejoin="round" /><rect x="23.5" y="11.5" width="2" height="2" fill="#3a5464"/></svg>
<div class="t" style="left:1182.60px;top:76.36px;font-size:17.3px;color:#3a5464;transform:scaleY(1.05);transform-origin:0 14.64px;">Print</div>
<svg class="r" style="left:1262.00px;top:70.00px;" width="28" height="28" viewBox="0 0 28 28"><path d="M22.5 7 V5 C22.5 4 22 3.5 21 3.5 H5 C4 3.5 3.5 4 3.5 5 V23 C3.5 24 4 24.5 5 24.5 H21 C22 24.5 22.5 24 22.5 23 V21 M8 14 H22 M17.5 9.5 L22 14 L17.5 18.5" fill="none" stroke="#3a5464" stroke-width="2.5" stroke-linecap="round" stroke-linejoin="round" /></svg>
<div class="t" style="left:1296.40px;top:76.36px;font-size:17.3px;color:#3a5464;transform:scaleY(1.05);transform-origin:0 14.64px;">Export</div>
<svg class="r" style="left:1398.00px;top:72.00px;" width="12" height="24" viewBox="0 0 12 24"><circle cx="6" cy="4.6" r="2.6" fill="#3a5464"/><circle cx="6" cy="11.8" r="2.6" fill="#3a5464"/><circle cx="6" cy="19.4" r="2.6" fill="#3a5464"/></svg>
<div class="t" style="left:1424.70px;top:76.36px;font-size:17.3px;color:#3a5464;transform:scaleY(1.05);transform-origin:0 14.64px;">More</div>
<svg class="r" style="left:1474.00px;top:80.00px;" width="12" height="8" viewBox="0 0 12 8"><path d="M1 1.5 H11 L6 7 Z" fill="#8f9aa2"/></svg>
<div class="t" style="left:444.40px;top:132.79px;font-size:27.3px;color:#17212b;transform:scaleY(1.05);transform-origin:0 23.11px;-webkit-text-stroke:0.35px #17212b;">All registrations</div>
<svg class="r" style="left:2362.00px;top:134.00px;" width="26" height="26" viewBox="0 0 26 26"><path d="M20.5 13 A8.5 8.5 0 1 1 18 7" fill="none" stroke="#3a5464" stroke-width="2.6" stroke-linecap="round" stroke-linejoin="round" /><path d="M15 3 L22.5 3 L22.5 10.5 Z" fill="#3a5464"/></svg>
<svg class="r" style="left:2409.00px;top:136.00px;" width="12" height="22" viewBox="0 0 12 22"><circle cx="6" cy="3.6" r="2.6" fill="#3a5464"/><circle cx="6" cy="11" r="2.6" fill="#3a5464"/><circle cx="6" cy="18.5" r="2.6" fill="#3a5464"/></svg>
<div class="r" style="left:2455.50px;top:124.00px;width:1.50px;height:45.00px;background:#e3e6e9;"></div>
<div class="r" style="left:2477.00px;top:127.00px;width:40.00px;height:40.00px;background:#e9ecef;border-radius:6px;"></div>
<svg class="r" style="left:2484.00px;top:136.00px;" width="26" height="22" viewBox="0 0 26 22"><rect x="3" y="3" width="20" height="16" rx="2" fill="none" stroke="#3a5464" stroke-width="2.6"/><rect x="3" y="6.8" width="20" height="2.2" fill="#3a5464"/><rect x="3" y="10.5" width="20" height="2.2" fill="#3a5464"/><rect x="3" y="14.2" width="20" height="2.2" fill="#3a5464"/><rect x="6.6" y="3" width="2.2" height="16" fill="#3a5464"/></svg>
<svg class="r" style="left:2524.00px;top:132.00px;" width="30" height="30" viewBox="0 0 30 30"><circle cx="14.5" cy="14.5" r="11.5" fill="none" stroke="#3a5464" stroke-width="2.6"/><path d="M14.5 3 V14.5 L22.5 22.5 M14.5 14.5 H26" fill="none" stroke="#3a5464" stroke-width="2.6" stroke-linecap="round" stroke-linejoin="round" /></svg>
<div class="r" style="left:439.4px;top:190px;width:261.2px;height:36.4px;border:1.5px solid #6b8292;border-radius:5px;"></div>
<svg class="r" style="left:450.00px;top:197.00px;" width="28" height="28" viewBox="0 0 28 28"><circle cx="10.5" cy="10.5" r="7" fill="none" stroke="#3a5464" stroke-width="2.6"/><path d="M15.5 15.5 L22.5 22.5" fill="none" stroke="#3a5464" stroke-width="2.8" stroke-linecap="round" stroke-linejoin="round" /></svg>
<div class="t" style="left:480.50px;top:200.63px;font-size:17.8px;color:#b8c3cb;transform:scaleY(1.05);transform-origin:0 15.07px;">Search</div>
<svg class="r" style="left:728.00px;top:198.00px;" width="24" height="24" viewBox="0 0 24 24"><path d="M12 3.5 V20.5 M3.5 12 H20.5" fill="none" stroke="#3a5464" stroke-width="2.4" stroke-linecap="round" stroke-linejoin="round" stroke-linecap="butt"/></svg>
<div class="t" style="left:760.20px;top:200.63px;font-size:17.8px;color:#3a5464;transform:scaleY(1.05);transform-origin:0 15.07px;-webkit-text-stroke:0.3px #3a5464;">Add filter</div>
<div class="t" style="left:439.40px;top:255.41px;font-size:17px;color:#465e70;font-weight:700;transform:scaleY(1.05);transform-origin:0 14.39px;letter-spacing:-0.3px;">Inspection point number</div>
<div class="t" style="left:734.00px;top:255.41px;font-size:17px;color:#465e70;font-weight:700;transform:scaleY(1.05);transform-origin:0 14.39px;letter-spacing:-0.3px;">Inspection point subject</div>
<div class="t" style="left:1122.00px;top:255.41px;font-size:17px;color:#465e70;font-weight:700;transform:scaleY(1.05);transform-origin:0 14.39px;letter-spacing:-0.3px;">Planned</div>
<div class="t" style="left:1260.00px;top:255.41px;font-size:17px;color:#465e70;font-weight:700;transform:scaleY(1.05);transform-origin:0 14.39px;letter-spacing:-0.3px;">Inspection plan</div>
<div class="t" style="left:1503.00px;top:255.41px;font-size:17px;color:#465e70;font-weight:700;transform:scaleY(1.05);transform-origin:0 14.39px;letter-spacing:-0.3px;">Memo no.</div>
<div class="t" style="left:1659.00px;top:255.41px;font-size:17px;color:#465e70;font-weight:700;transform:scaleY(1.05);transform-origin:0 14.39px;letter-spacing:-0.3px;">Type</div>
<div class="t" style="left:1883.00px;top:255.41px;font-size:17px;color:#465e70;font-weight:700;transform:scaleY(1.05);transform-origin:0 14.39px;letter-spacing:-0.3px;">Modified by</div>
<svg class="r" style="left:2272.00px;top:254.00px;" width="20" height="20" viewBox="0 0 20 20"><path d="M10 3 V16 M4.5 10.5 L10 16 L15.5 10.5" fill="none" stroke="#3a5464" stroke-width="1.9" stroke-linecap="round" stroke-linejoin="round" /></svg>
<div class="t" style="left:2301.00px;top:255.41px;font-size:17px;color:#465e70;font-weight:700;transform:scaleY(1.05);transform-origin:0 14.39px;letter-spacing:-0.3px;">Date modified</div>
<div class="r" style="left:2464.7px;top:247px;width:64px;height:36px;overflow:hidden;"><div class="t" style="left:0;top:8.41px;font-size:17px;color:#465e70;font-weight:700;letter-spacing:-0.3px;">Created</div></div>
<div class="r" style="left:2516.00px;top:247.00px;width:13.00px;height:36.00px;background:linear-gradient(to right, rgba(0,0,0,0), rgba(0,0,0,0.08));"></div>
<svg class="r" style="left:2536.00px;top:252.00px;" width="22" height="22" viewBox="0 0 22 22"><path d="M11 2.5 V19.5 M2.5 11 H19.5" fill="none" stroke="#465e70" stroke-width="2.2" stroke-linecap="round" stroke-linejoin="round" stroke-linecap="butt"/></svg>
<div class="r" style="left:434.00px;top:282.50px;width:2130.00px;height:1.00px;background:#e6e6e6;"></div>
<div class="r" style="left:434.00px;top:283.50px;width:2115.00px;height:5.00px;background:linear-gradient(to bottom, rgba(0,0,0,0.07), rgba(0,0,0,0));"></div>
<div class="r" style="left:434px;top:288px;width:2115px;height:1140px;overflow:hidden;">
<div class="r" style="left:0.00px;top:-0.50px;width:2115.00px;height:40.75px;background:#d3ebb0;"></div>
<div class="r" style="left:0.00px;top:39.25px;width:2115.00px;height:1.00px;background:#eef3e8;"></div>
<div class="r" style="left:5px;top:11.85px;width:15px;height:15px;border-radius:50%;background:#f9853a;"></div>
<div class="t" style="left:30.70px;top:11.38px;font-size:17.8px;color:#17212b;letter-spacing:0px;transform:scaleY(1.05);transform-origin:0 15.07px;">2.6</div>
<div class="t" style="left:300.00px;top:11.38px;font-size:17.8px;color:#17212b;letter-spacing:0px;transform:scaleY(1.05);transform-origin:0 15.07px;">Mounting of plaster</div>
<div class="t" style="left:826.00px;top:11.38px;font-size:17.8px;color:#17212b;letter-spacing:0px;transform:scaleY(1.05);transform-origin:0 15.07px;">Inspection_Internal fitout</div>
<div class="t" style="left:1069.00px;top:11.38px;font-size:17.8px;color:#17212b;letter-spacing:0px;transform:scaleY(1.05);transform-origin:0 15.07px;">I33</div>
<div class="t" style="left:1225.00px;top:11.38px;font-size:17.8px;color:#17212b;letter-spacing:0px;transform:scaleY(1.05);transform-origin:0 15.07px;">Inspection</div>
<div class="t" style="left:1449.00px;top:11.38px;font-size:17.8px;color:#17212b;letter-spacing:-0.35px;transform:scaleY(1.05);transform-origin:0 15.07px;">Magnus Dahl Larsen, Dalux ApS</div>
<div class="t" style="left:1836.00px;top:11.38px;font-size:17.8px;color:#17212b;letter-spacing:-0.3px;transform:scaleY(1.05);transform-origin:0 15.07px;">15 Feb 2023, 10:11</div>
<div class="t" style="left:2030.00px;top:11.38px;font-size:17.8px;color:#17212b;letter-spacing:-0.3px;transform:scaleY(1.05);transform-origin:0 15.07px;">Magnus Dahl Larsen</div>
<div class="r" style="left:0.00px;top:40.25px;width:2115.00px;height:40.15px;background:#d3ebb0;"></div>
<div class="r" style="left:0.00px;top:79.40px;width:2115.00px;height:1.00px;background:#eef3e8;"></div>
<div class="r" style="left:5px;top:52.00px;width:15px;height:15px;border-radius:50%;background:#f9853a;"></div>
<div class="t" style="left:30.70px;top:51.53px;font-size:17.8px;color:#17212b;letter-spacing:0px;transform:scaleY(1.05);transform-origin:0 15.07px;">2.6</div>
<div class="t" style="left:300.00px;top:51.53px;font-size:17.8px;color:#17212b;letter-spacing:0px;transform:scaleY(1.05);transform-origin:0 15.07px;">Mounting of plaster</div>
<div class="t" style="left:826.00px;top:51.53px;font-size:17.8px;color:#17212b;letter-spacing:0px;transform:scaleY(1.05);transform-origin:0 15.07px;">Inspection_Internal fitout</div>
<div class="t" style="left:1069.00px;top:51.53px;font-size:17.8px;color:#17212b;letter-spacing:0px;transform:scaleY(1.05);transform-origin:0 15.07px;">I32</div>
<div class="t" style="left:1225.00px;top:51.53px;font-size:17.8px;color:#17212b;letter-spacing:0px;transform:scaleY(1.05);transform-origin:0 15.07px;">Inspection</div>
<div class="t" style="left:1449.00px;top:51.53px;font-size:17.8px;color:#17212b;letter-spacing:-0.35px;transform:scaleY(1.05);transform-origin:0 15.07px;">Magnus Dahl Larsen, Dalux ApS</div>
<div class="t" style="left:1836.00px;top:51.53px;font-size:17.8px;color:#17212b;letter-spacing:-0.3px;transform:scaleY(1.05);transform-origin:0 15.07px;">15 Feb 2023, 10:10</div>
<div class="t" style="left:2030.00px;top:51.53px;font-size:17.8px;color:#17212b;letter-spacing:-0.3px;transform:scaleY(1.05);transform-origin:0 15.07px;">Magnus Dahl Larsen</div>
<div class="r" style="left:0.00px;top:80.40px;width:2115.00px;height:40.10px;background:#d3ebb0;"></div>
<div class="r" style="left:0.00px;top:119.50px;width:2115.00px;height:1.00px;background:#eef3e8;"></div>
<div class="r" style="left:5px;top:92.10px;width:15px;height:15px;border-radius:50%;background:#f9853a;"></div>
<div class="t" style="left:30.70px;top:91.63px;font-size:17.8px;color:#17212b;letter-spacing:0px;transform:scaleY(1.05);transform-origin:0 15.07px;">1.2</div>
<div class="t" style="left:300.00px;top:91.63px;font-size:17.8px;color:#17212b;letter-spacing:0px;transform:scaleY(1.05);transform-origin:0 15.07px;">Formwork Certificate</div>
<div class="t" style="left:826.00px;top:91.63px;font-size:17.8px;color:#17212b;letter-spacing:0px;transform:scaleY(1.05);transform-origin:0 15.07px;">Inspection_Concrete pour</div>
<div class="t" style="left:1069.00px;top:91.63px;font-size:17.8px;color:#17212b;letter-spacing:0px;transform:scaleY(1.05);transform-origin:0 15.07px;">I30</div>
<div class="t" style="left:1225.00px;top:91.63px;font-size:17.8px;color:#17212b;letter-spacing:0px;transform:scaleY(1.05);transform-origin:0 15.07px;">Inspection</div>
<div class="t" style="left:1449.00px;top:91.63px;font-size:17.8px;color:#17212b;letter-spacing:-0.35px;transform:scaleY(1.05);transform-origin:0 15.07px;">Magnus Dahl Larsen, Dalux ApS</div>
<div class="t" style="left:1836.00px;top:91.63px;font-size:17.8px;color:#17212b;letter-spacing:-0.3px;transform:scaleY(1.05);transform-origin:0 15.07px;">25 Jan 2023, 15:12</div>
<div class="t" style="left:2030.00px;top:91.63px;font-size:17.8px;color:#17212b;letter-spacing:-0.3px;transform:scaleY(1.05);transform-origin:0 15.07px;">Magnus Dahl Larsen</div>
<div class="r" style="left:0.00px;top:120.50px;width:2115.00px;height:37.50px;background:#d3ebb0;"></div>
<div class="r" style="left:5px;top:131.80px;width:15px;height:15px;border-radius:50%;background:#f9853a;"></div>
<div class="t" style="left:30.70px;top:131.33px;font-size:17.8px;color:#17212b;letter-spacing:0px;transform:scaleY(1.05);transform-origin:0 15.07px;">1.2</div>
<div class="t" style="left:300.00px;top:131.33px;font-size:17.8px;color:#17212b;letter-spacing:0px;transform:scaleY(1.05);transform-origin:0 15.07px;">Formwork Certificate</div>
<div class="t" style="left:826.00px;top:131.33px;font-size:17.8px;color:#17212b;letter-spacing:0px;transform:scaleY(1.05);transform-origin:0 15.07px;">Inspection_Concrete pour</div>
<div class="t" style="left:1069.00px;top:131.33px;font-size:17.8px;color:#17212b;letter-spacing:0px;transform:scaleY(1.05);transform-origin:0 15.07px;">I29</div>
<div class="t" style="left:1225.00px;top:131.33px;font-size:17.8px;color:#17212b;letter-spacing:0px;transform:scaleY(1.05);transform-origin:0 15.07px;">Inspection</div>
<div class="t" style="left:1449.00px;top:131.33px;font-size:17.8px;color:#17212b;letter-spacing:-0.35px;transform:scaleY(1.05);transform-origin:0 15.07px;">Magnus Dahl Larsen, Dalux ApS</div>
<div class="t" style="left:1836.00px;top:131.33px;font-size:17.8px;color:#17212b;letter-spacing:-0.3px;transform:scaleY(1.05);transform-origin:0 15.07px;">25 Jan 2023, 15:12</div>
<div class="t" style="left:2030.00px;top:131.33px;font-size:17.8px;color:#17212b;letter-spacing:-0.3px;transform:scaleY(1.05);transform-origin:0 15.07px;">Magnus Dahl Larsen</div>
<div class="r" style="left:0.00px;top:198.90px;width:2115.00px;height:1.00px;background:#e9ebed;"></div>
<div class="r" style="left:5px;top:171.50px;width:15px;height:15px;border-radius:50%;background:#269a55;"></div>
<div class="t" style="left:30.70px;top:171.03px;font-size:17.8px;color:#17212b;letter-spacing:0px;transform:scaleY(1.05);transform-origin:0 15.07px;">1.1</div>
<div class="t" style="left:300.00px;top:171.03px;font-size:17.8px;color:#17212b;letter-spacing:0px;transform:scaleY(1.05);transform-origin:0 15.07px;">All materials delivered</div>
<div class="t" style="left:826.00px;top:171.03px;font-size:17.8px;color:#17212b;letter-spacing:0px;transform:scaleY(1.05);transform-origin:0 15.07px;">Inspection_Internal fitout</div>
<div class="t" style="left:1069.00px;top:171.03px;font-size:17.8px;color:#17212b;letter-spacing:0px;transform:scaleY(1.05);transform-origin:0 15.07px;">I-IF_5</div>
<div class="t" style="left:1225.00px;top:171.03px;font-size:17.8px;color:#17212b;letter-spacing:0px;transform:scaleY(1.05);transform-origin:0 15.07px;">Inspection_Internal fitout</div>
<div class="t" style="left:1449.00px;top:171.03px;font-size:17.8px;color:#17212b;letter-spacing:-0.35px;transform:scaleY(1.05);transform-origin:0 15.07px;">Stefan Lorenzen, Dalux ApS</div>
<div class="t" style="left:1836.00px;top:171.03px;font-size:17.8px;color:#17212b;letter-spacing:-0.3px;transform:scaleY(1.05);transform-origin:0 15.07px;">2 Sep 2022, 11:13</div>
<div class="t" style="left:2030.00px;top:171.03px;font-size:17.8px;color:#17212b;letter-spacing:-0.3px;transform:scaleY(1.05);transform-origin:0 15.07px;">Stefan Lorenzen</div>
<div class="r" style="left:0.00px;top:239.50px;width:2115.00px;height:1.00px;background:#e9ebed;"></div>
<div class="r" style="left:5px;top:212.10px;width:15px;height:15px;border-radius:50%;background:#269a55;"></div>
<div class="t" style="left:30.70px;top:211.63px;font-size:17.8px;color:#17212b;letter-spacing:0px;transform:scaleY(1.05);transform-origin:0 15.07px;">1.4</div>
<div class="t" style="left:300.00px;top:211.63px;font-size:17.8px;color:#17212b;letter-spacing:0px;transform:scaleY(1.05);transform-origin:0 15.07px;">Inserts &amp; penetrations complete</div>
<svg class="r" style="left:693.00px;top:209.50px;" width="22" height="18" viewBox="0 0 22 18"><path d="M2.5 9 L8 14.5 L19 3.5" fill="none" stroke="#3a5464" stroke-width="2.6" stroke-linecap="round" stroke-linejoin="round" /></svg>
<div class="t" style="left:826.00px;top:211.63px;font-size:17.8px;color:#17212b;letter-spacing:0px;transform:scaleY(1.05);transform-origin:0 15.07px;">Inspection_Concrete pour</div>
<div class="t" style="left:1069.00px;top:211.63px;font-size:17.8px;color:#17212b;letter-spacing:0px;transform:scaleY(1.05);transform-origin:0 15.07px;">I28</div>
<div class="t" style="left:1225.00px;top:211.63px;font-size:17.8px;color:#17212b;letter-spacing:0px;transform:scaleY(1.05);transform-origin:0 15.07px;">Inspection</div>
<div class="t" style="left:1449.00px;top:211.63px;font-size:17.8px;color:#17212b;letter-spacing:-0.35px;transform:scaleY(1.05);transform-origin:0 15.07px;">Magnus Dahl Larsen, Dalux ApS</div>
<div class="t" style="left:1836.00px;top:211.63px;font-size:17.8px;color:#17212b;letter-spacing:-0.3px;transform:scaleY(1.05);transform-origin:0 15.07px;">19 Aug 2022, 13:32</div>
<div class="t" style="left:2030.00px;top:211.63px;font-size:17.8px;color:#17212b;letter-spacing:-0.3px;transform:scaleY(1.05);transform-origin:0 15.07px;">Magnus Dahl Larsen</div>
<div class="r" style="left:0.00px;top:279.70px;width:2115.00px;height:1.00px;background:#e9ebed;"></div>
<div class="r" style="left:5px;top:252.30px;width:15px;height:15px;border-radius:50%;background:#269a55;"></div>
<div class="t" style="left:30.70px;top:251.83px;font-size:17.8px;color:#17212b;letter-spacing:0px;transform:scaleY(1.05);transform-origin:0 15.07px;">2.2</div>
<div class="t" style="left:300.00px;top:251.83px;font-size:17.8px;color:#17212b;letter-spacing:0px;transform:scaleY(1.05);transform-origin:0 15.07px;">Door openings</div>
<div class="t" style="left:826.00px;top:251.83px;font-size:17.8px;color:#17212b;letter-spacing:0px;transform:scaleY(1.05);transform-origin:0 15.07px;">Inspection_Internal fitout</div>
<div class="t" style="left:1069.00px;top:251.83px;font-size:17.8px;color:#17212b;letter-spacing:0px;transform:scaleY(1.05);transform-origin:0 15.07px;">I-IF_4</div>
<div class="t" style="left:1225.00px;top:251.83px;font-size:17.8px;color:#17212b;letter-spacing:0px;transform:scaleY(1.05);transform-origin:0 15.07px;">Inspection_Internal fitout</div>
<div class="t" style="left:1449.00px;top:251.83px;font-size:17.8px;color:#17212b;letter-spacing:-0.35px;transform:scaleY(1.05);transform-origin:0 15.07px;">Magnus Dahl Larsen, Dalux ApS</div>
<div class="t" style="left:1836.00px;top:251.83px;font-size:17.8px;color:#17212b;letter-spacing:-0.3px;transform:scaleY(1.05);transform-origin:0 15.07px;">2 Nov 2021, 15:24</div>
<div class="t" style="left:2030.00px;top:251.83px;font-size:17.8px;color:#17212b;letter-spacing:-0.3px;transform:scaleY(1.05);transform-origin:0 15.07px;">Magnus Dahl Larsen</div>
<div class="r" style="left:0.00px;top:319.40px;width:2115.00px;height:1.00px;background:#e9ebed;"></div>
<div class="r" style="left:5px;top:292.00px;width:15px;height:15px;border-radius:50%;background:#269a55;"></div>
<div class="t" style="left:30.70px;top:291.53px;font-size:17.8px;color:#17212b;letter-spacing:0px;transform:scaleY(1.05);transform-origin:0 15.07px;">2.1</div>
<div class="t" style="left:300.00px;top:291.53px;font-size:17.8px;color:#17212b;letter-spacing:0px;transform:scaleY(1.05);transform-origin:0 15.07px;">Walls</div>
<div class="t" style="left:826.00px;top:291.53px;font-size:17.8px;color:#17212b;letter-spacing:0px;transform:scaleY(1.05);transform-origin:0 15.07px;">Inspection_Internal fitout</div>
<div class="t" style="left:1069.00px;top:291.53px;font-size:17.8px;color:#17212b;letter-spacing:0px;transform:scaleY(1.05);transform-origin:0 15.07px;">I-IF_3</div>
<div class="t" style="left:1225.00px;top:291.53px;font-size:17.8px;color:#17212b;letter-spacing:0px;transform:scaleY(1.05);transform-origin:0 15.07px;">Inspection_Internal fitout</div>
<div class="t" style="left:1449.00px;top:291.53px;font-size:17.8px;color:#17212b;letter-spacing:-0.35px;transform:scaleY(1.05);transform-origin:0 15.07px;">Magnus Dahl Larsen, Dalux ApS</div>
<div class="t" style="left:1836.00px;top:291.53px;font-size:17.8px;color:#17212b;letter-spacing:-0.3px;transform:scaleY(1.05);transform-origin:0 15.07px;">2 Nov 2021, 15:24</div>
<div class="t" style="left:2030.00px;top:291.53px;font-size:17.8px;color:#17212b;letter-spacing:-0.3px;transform:scaleY(1.05);transform-origin:0 15.07px;">Magnus Dahl Larsen</div>
<div class="r" style="left:0.00px;top:360.40px;width:2115.00px;height:1.00px;background:#e9ebed;"></div>
<div class="r" style="left:5px;top:333.00px;width:15px;height:15px;border-radius:50%;background:#269a55;"></div>
<div class="t" style="left:30.70px;top:332.53px;font-size:17.8px;color:#17212b;letter-spacing:0px;transform:scaleY(1.05);transform-origin:0 15.07px;">2.1</div>
<div class="t" style="left:300.00px;top:332.53px;font-size:17.8px;color:#17212b;letter-spacing:0px;transform:scaleY(1.05);transform-origin:0 15.07px;">Walls</div>
<div class="t" style="left:826.00px;top:332.53px;font-size:17.8px;color:#17212b;letter-spacing:0px;transform:scaleY(1.05);transform-origin:0 15.07px;">Inspection_Internal fitout</div>
<div class="t" style="left:1069.00px;top:332.53px;font-size:17.8px;color:#17212b;letter-spacing:0px;transform:scaleY(1.05);transform-origin:0 15.07px;">I-IF_2</div>
<div class="t" style="left:1225.00px;top:332.53px;font-size:17.8px;color:#17212b;letter-spacing:0px;transform:scaleY(1.05);transform-origin:0 15.07px;">Inspection_Internal fitout</div>
<div class="t" style="left:1449.00px;top:332.53px;font-size:17.8px;color:#17212b;letter-spacing:-0.35px;transform:scaleY(1.05);transform-origin:0 15.07px;">Magnus Dahl Larsen, Dalux ApS</div>
<div class="t" style="left:1836.00px;top:332.53px;font-size:17.8px;color:#17212b;letter-spacing:-0.3px;transform:scaleY(1.05);transform-origin:0 15.07px;">2 Nov 2021, 15:23</div>
<div class="t" style="left:2030.00px;top:332.53px;font-size:17.8px;color:#17212b;letter-spacing:-0.3px;transform:scaleY(1.05);transform-origin:0 15.07px;">Magnus Dahl Larsen</div>
<div class="r" style="left:0.00px;top:401.20px;width:2115.00px;height:1.00px;background:#e9ebed;"></div>
<div class="r" style="left:5px;top:373.80px;width:15px;height:15px;border-radius:50%;background:#269a55;"></div>
<div class="t" style="left:30.70px;top:373.33px;font-size:17.8px;color:#17212b;letter-spacing:0px;transform:scaleY(1.05);transform-origin:0 15.07px;">1.1</div>
<div class="t" style="left:300.00px;top:373.33px;font-size:17.8px;color:#17212b;letter-spacing:0px;transform:scaleY(1.05);transform-origin:0 15.07px;">Walls</div>
<div class="t" style="left:826.00px;top:373.33px;font-size:17.8px;color:#17212b;letter-spacing:0px;transform:scaleY(1.05);transform-origin:0 15.07px;">Inspection_Internal fitout</div>
<div class="t" style="left:1069.00px;top:373.33px;font-size:17.8px;color:#17212b;letter-spacing:0px;transform:scaleY(1.05);transform-origin:0 15.07px;">I-IF_1</div>
<div class="t" style="left:1225.00px;top:373.33px;font-size:17.8px;color:#17212b;letter-spacing:0px;transform:scaleY(1.05);transform-origin:0 15.07px;">Inspection</div>
<div class="t" style="left:1449.00px;top:373.33px;font-size:17.8px;color:#17212b;letter-spacing:-0.35px;transform:scaleY(1.05);transform-origin:0 15.07px;">Magnus Dahl Larsen, Dalux ApS</div>
<div class="t" style="left:1836.00px;top:373.33px;font-size:17.8px;color:#17212b;letter-spacing:-0.3px;transform:scaleY(1.05);transform-origin:0 15.07px;">19 Oct 2021, 10:32</div>
<div class="t" style="left:2030.00px;top:373.33px;font-size:17.8px;color:#17212b;letter-spacing:-0.3px;transform:scaleY(1.05);transform-origin:0 15.07px;">Magnus Dahl Larsen</div>
<div class="r" style="left:0.00px;top:440.70px;width:2115.00px;height:1.00px;background:#e9ebed;"></div>
<div class="r" style="left:5px;top:413.30px;width:15px;height:15px;border-radius:50%;background:#269a55;"></div>
<div class="t" style="left:30.70px;top:412.83px;font-size:17.8px;color:#17212b;letter-spacing:0px;transform:scaleY(1.05);transform-origin:0 15.07px;">1.1</div>
<div class="t" style="left:300.00px;top:412.83px;font-size:17.8px;color:#17212b;letter-spacing:0px;transform:scaleY(1.05);transform-origin:0 15.07px;">Walls</div>
<div class="t" style="left:826.00px;top:412.83px;font-size:17.8px;color:#17212b;letter-spacing:0px;transform:scaleY(1.05);transform-origin:0 15.07px;">Inspection_Internal fitout</div>
<div class="t" style="left:1069.00px;top:412.83px;font-size:17.8px;color:#17212b;letter-spacing:0px;transform:scaleY(1.05);transform-origin:0 15.07px;">I27</div>
<div class="t" style="left:1225.00px;top:412.83px;font-size:17.8px;color:#17212b;letter-spacing:0px;transform:scaleY(1.05);transform-origin:0 15.07px;">Inspection</div>
<div class="t" style="left:1449.00px;top:412.83px;font-size:17.8px;color:#17212b;letter-spacing:-0.35px;transform:scaleY(1.05);transform-origin:0 15.07px;">Magnus Dahl Larsen, Dalux ApS</div>
<div class="t" style="left:1836.00px;top:412.83px;font-size:17.8px;color:#17212b;letter-spacing:-0.3px;transform:scaleY(1.05);transform-origin:0 15.07px;">1 Sep 2021, 09:33</div>
<div class="t" style="left:2030.00px;top:412.83px;font-size:17.8px;color:#17212b;letter-spacing:-0.3px;transform:scaleY(1.05);transform-origin:0 15.07px;">Magnus Dahl Larsen</div>
<div class="r" style="left:0.00px;top:480.50px;width:2115.00px;height:1.00px;background:#e9ebed;"></div>
<div class="r" style="left:5px;top:453.10px;width:15px;height:15px;border-radius:50%;background:#269a55;"></div>
<div class="t" style="left:30.70px;top:452.63px;font-size:17.8px;color:#17212b;letter-spacing:0px;transform:scaleY(1.05);transform-origin:0 15.07px;">1.1</div>
<div class="t" style="left:300.00px;top:452.63px;font-size:17.8px;color:#17212b;letter-spacing:0px;transform:scaleY(1.05);transform-origin:0 15.07px;">Walls</div>
<div class="t" style="left:826.00px;top:452.63px;font-size:17.8px;color:#17212b;letter-spacing:0px;transform:scaleY(1.05);transform-origin:0 15.07px;">Inspection_Internal fitout</div>
<div class="t" style="left:1069.00px;top:452.63px;font-size:17.8px;color:#17212b;letter-spacing:0px;transform:scaleY(1.05);transform-origin:0 15.07px;">I26</div>
<div class="t" style="left:1225.00px;top:452.63px;font-size:17.8px;color:#17212b;letter-spacing:0px;transform:scaleY(1.05);transform-origin:0 15.07px;">Inspection</div>
<div class="t" style="left:1449.00px;top:452.63px;font-size:17.8px;color:#17212b;letter-spacing:-0.35px;transform:scaleY(1.05);transform-origin:0 15.07px;">Magnus Dahl Larsen, Dalux ApS</div>
<div class="t" style="left:1836.00px;top:452.63px;font-size:17.8px;color:#17212b;letter-spacing:-0.3px;transform:scaleY(1.05);transform-origin:0 15.07px;">1 Sep 2021, 09:33</div>
<div class="t" style="left:2030.00px;top:452.63px;font-size:17.8px;color:#17212b;letter-spacing:-0.3px;transform:scaleY(1.05);transform-origin:0 15.07px;">Magnus Dahl Larsen</div>
<div class="r" style="left:0.00px;top:520.40px;width:2115.00px;height:1.00px;background:#e9ebed;"></div>
<div class="r" style="left:5px;top:493.00px;width:15px;height:15px;border-radius:50%;background:#269a55;"></div>
<div class="t" style="left:30.70px;top:492.53px;font-size:17.8px;color:#17212b;letter-spacing:0px;transform:scaleY(1.05);transform-origin:0 15.07px;">1.1</div>
<div class="t" style="left:300.00px;top:492.53px;font-size:17.8px;color:#17212b;letter-spacing:0px;transform:scaleY(1.05);transform-origin:0 15.07px;">Walls</div>
<div class="t" style="left:826.00px;top:492.53px;font-size:17.8px;color:#17212b;letter-spacing:0px;transform:scaleY(1.05);transform-origin:0 15.07px;">Inspection_Internal fitout</div>
<div class="t" style="left:1069.00px;top:492.53px;font-size:17.8px;color:#17212b;letter-spacing:0px;transform:scaleY(1.05);transform-origin:0 15.07px;">I25</div>
<div class="t" style="left:1225.00px;top:492.53px;font-size:17.8px;color:#17212b;letter-spacing:0px;transform:scaleY(1.05);transform-origin:0 15.07px;">Inspection</div>
<div class="t" style="left:1449.00px;top:492.53px;font-size:17.8px;color:#17212b;letter-spacing:-0.35px;transform:scaleY(1.05);transform-origin:0 15.07px;">Mark Jay test</div>
<div class="t" style="left:1836.00px;top:492.53px;font-size:17.8px;color:#17212b;letter-spacing:-0.3px;transform:scaleY(1.05);transform-origin:0 15.07px;">23 Apr 2021, 11:48</div>
<div class="t" style="left:2030.00px;top:492.53px;font-size:17.8px;color:#17212b;letter-spacing:-0.3px;transform:scaleY(1.05);transform-origin:0 15.07px;">Mark Jay test</div>
<div class="r" style="left:0.00px;top:561.70px;width:2115.00px;height:1.00px;background:#e9ebed;"></div>
<div class="r" style="left:5px;top:534.30px;width:15px;height:15px;border-radius:50%;background:#269a55;"></div>
<div class="t" style="left:30.70px;top:533.83px;font-size:17.8px;color:#17212b;letter-spacing:0px;transform:scaleY(1.05);transform-origin:0 15.07px;">1.1</div>
<div class="t" style="left:300.00px;top:533.83px;font-size:17.8px;color:#17212b;letter-spacing:0px;transform:scaleY(1.05);transform-origin:0 15.07px;">Walls</div>
<div class="t" style="left:826.00px;top:533.83px;font-size:17.8px;color:#17212b;letter-spacing:0px;transform:scaleY(1.05);transform-origin:0 15.07px;">Inspection_Internal fitout</div>
<div class="t" style="left:1069.00px;top:533.83px;font-size:17.8px;color:#17212b;letter-spacing:0px;transform:scaleY(1.05);transform-origin:0 15.07px;">I24</div>
<div class="t" style="left:1225.00px;top:533.83px;font-size:17.8px;color:#17212b;letter-spacing:0px;transform:scaleY(1.05);transform-origin:0 15.07px;">Inspection</div>
<div class="t" style="left:1449.00px;top:533.83px;font-size:17.8px;color:#17212b;letter-spacing:-0.35px;transform:scaleY(1.05);transform-origin:0 15.07px;">Stefan Lorenzen, Dalux ApS</div>
<div class="t" style="left:1836.00px;top:533.83px;font-size:17.8px;color:#17212b;letter-spacing:-0.3px;transform:scaleY(1.05);transform-origin:0 15.07px;">1 Mar 2021, 09:38</div>
<div class="t" style="left:2030.00px;top:533.83px;font-size:17.8px;color:#17212b;letter-spacing:-0.3px;transform:scaleY(1.05);transform-origin:0 15.07px;">Stefan Lorenzen</div>
<div class="r" style="left:0.00px;top:601.40px;width:2115.00px;height:1.00px;background:#e9ebed;"></div>
<div class="r" style="left:5px;top:574.00px;width:15px;height:15px;border-radius:50%;background:#269a55;"></div>
<div class="t" style="left:30.70px;top:573.53px;font-size:17.8px;color:#17212b;letter-spacing:0px;transform:scaleY(1.05);transform-origin:0 15.07px;">1.1</div>
<div class="t" style="left:300.00px;top:573.53px;font-size:17.8px;color:#17212b;letter-spacing:0px;transform:scaleY(1.05);transform-origin:0 15.07px;">Walls</div>
<div class="t" style="left:826.00px;top:573.53px;font-size:17.8px;color:#17212b;letter-spacing:0px;transform:scaleY(1.05);transform-origin:0 15.07px;">Inspection_Internal fitout</div>
<div class="t" style="left:1069.00px;top:573.53px;font-size:17.8px;color:#17212b;letter-spacing:0px;transform:scaleY(1.05);transform-origin:0 15.07px;">I23</div>
<div class="t" style="left:1225.00px;top:573.53px;font-size:17.8px;color:#17212b;letter-spacing:0px;transform:scaleY(1.05);transform-origin:0 15.07px;">Inspection</div>
<div class="t" style="left:1449.00px;top:573.53px;font-size:17.8px;color:#17212b;letter-spacing:-0.35px;transform:scaleY(1.05);transform-origin:0 15.07px;">Mark Jaaaa</div>
<div class="t" style="left:1836.00px;top:573.53px;font-size:17.8px;color:#17212b;letter-spacing:-0.3px;transform:scaleY(1.05);transform-origin:0 15.07px;">25 Feb 2021, 17:48</div>
<div class="t" style="left:2030.00px;top:573.53px;font-size:17.8px;color:#17212b;letter-spacing:-0.3px;transform:scaleY(1.05);transform-origin:0 15.07px;">Mark Jaaaa</div>
<div class="r" style="left:0.00px;top:642.20px;width:2115.00px;height:1.00px;background:#e9ebed;"></div>
<div class="r" style="left:5px;top:614.80px;width:15px;height:15px;border-radius:50%;background:#269a55;"></div>
<div class="t" style="left:30.70px;top:614.33px;font-size:17.8px;color:#17212b;letter-spacing:0px;transform:scaleY(1.05);transform-origin:0 15.07px;">1.1</div>
<div class="t" style="left:300.00px;top:614.33px;font-size:17.8px;color:#17212b;letter-spacing:0px;transform:scaleY(1.05);transform-origin:0 15.07px;">Walls</div>
<div class="t" style="left:826.00px;top:614.33px;font-size:17.8px;color:#17212b;letter-spacing:0px;transform:scaleY(1.05);transform-origin:0 15.07px;">Inspection_Internal fitout</div>
<div class="t" style="left:1069.00px;top:614.33px;font-size:17.8px;color:#17212b;letter-spacing:0px;transform:scaleY(1.05);transform-origin:0 15.07px;">I22</div>
<div class="t" style="left:1225.00px;top:614.33px;font-size:17.8px;color:#17212b;letter-spacing:0px;transform:scaleY(1.05);transform-origin:0 15.07px;">Inspection</div>
<div class="t" style="left:1449.00px;top:614.33px;font-size:17.8px;color:#17212b;letter-spacing:-0.35px;transform:scaleY(1.05);transform-origin:0 15.07px;">Stefan Lorenzen, Dalux ApS</div>
<div class="t" style="left:1836.00px;top:614.33px;font-size:17.8px;color:#17212b;letter-spacing:-0.3px;transform:scaleY(1.05);transform-origin:0 15.07px;">1 Dec 2020, 16:22</div>
<div class="t" style="left:2030.00px;top:614.33px;font-size:17.8px;color:#17212b;letter-spacing:-0.3px;transform:scaleY(1.05);transform-origin:0 15.07px;">Stefan Lorenzen</div>
<div class="r" style="left:0.00px;top:683.20px;width:2115.00px;height:1.00px;background:#e9ebed;"></div>
<div class="r" style="left:5px;top:655.80px;width:15px;height:15px;border-radius:50%;background:#269a55;"></div>
<div class="t" style="left:30.70px;top:655.33px;font-size:17.8px;color:#17212b;letter-spacing:0px;transform:scaleY(1.05);transform-origin:0 15.07px;">1.1</div>
<div class="t" style="left:300.00px;top:655.33px;font-size:17.8px;color:#17212b;letter-spacing:0px;transform:scaleY(1.05);transform-origin:0 15.07px;">Walls</div>
<div class="t" style="left:826.00px;top:655.33px;font-size:17.8px;color:#17212b;letter-spacing:0px;transform:scaleY(1.05);transform-origin:0 15.07px;">Inspection_Internal fitout</div>
<div class="t" style="left:1069.00px;top:655.33px;font-size:17.8px;color:#17212b;letter-spacing:0px;transform:scaleY(1.05);transform-origin:0 15.07px;">I21</div>
<div class="t" style="left:1225.00px;top:655.33px;font-size:17.8px;color:#17212b;letter-spacing:0px;transform:scaleY(1.05);transform-origin:0 15.07px;">Inspection</div>
<div class="t" style="left:1449.00px;top:655.33px;font-size:17.8px;color:#17212b;letter-spacing:-0.35px;transform:scaleY(1.05);transform-origin:0 15.07px;">Stefan Lorenzen, Dalux ApS</div>
<div class="t" style="left:1836.00px;top:655.33px;font-size:17.8px;color:#17212b;letter-spacing:-0.3px;transform:scaleY(1.05);transform-origin:0 15.07px;">27 Nov 2020, 15:38</div>
<div class="t" style="left:2030.00px;top:655.33px;font-size:17.8px;color:#17212b;letter-spacing:-0.3px;transform:scaleY(1.05);transform-origin:0 15.07px;">Stefan Lorenzen</div>
<div class="r" style="left:0.00px;top:722.30px;width:2115.00px;height:1.00px;background:#e9ebed;"></div>
<div class="r" style="left:5px;top:694.90px;width:15px;height:15px;border-radius:50%;background:#269a55;"></div>
<div class="t" style="left:30.70px;top:694.43px;font-size:17.8px;color:#17212b;letter-spacing:0px;transform:scaleY(1.05);transform-origin:0 15.07px;">1.1</div>
<div class="t" style="left:300.00px;top:694.43px;font-size:17.8px;color:#17212b;letter-spacing:0px;transform:scaleY(1.05);transform-origin:0 15.07px;">Walls</div>
<div class="t" style="left:826.00px;top:694.43px;font-size:17.8px;color:#17212b;letter-spacing:0px;transform:scaleY(1.05);transform-origin:0 15.07px;">Inspection_Internal fitout</div>
<div class="t" style="left:1069.00px;top:694.43px;font-size:17.8px;color:#17212b;letter-spacing:0px;transform:scaleY(1.05);transform-origin:0 15.07px;">I20</div>
<div class="t" style="left:1225.00px;top:694.43px;font-size:17.8px;color:#17212b;letter-spacing:0px;transform:scaleY(1.05);transform-origin:0 15.07px;">Inspection</div>
<div class="t" style="left:1449.00px;top:694.43px;font-size:17.8px;color:#17212b;letter-spacing:-0.35px;transform:scaleY(1.05);transform-origin:0 15.07px;">Magnus Dahl Larsen, Dalux ApS</div>
<div class="t" style="left:1836.00px;top:694.43px;font-size:17.8px;color:#17212b;letter-spacing:-0.3px;transform:scaleY(1.05);transform-origin:0 15.07px;">1 Oct 2020, 08:56</div>
<div class="t" style="left:2030.00px;top:694.43px;font-size:17.8px;color:#17212b;letter-spacing:-0.3px;transform:scaleY(1.05);transform-origin:0 15.07px;">Magnus Dahl Larsen</div>
<div class="r" style="left:0.00px;top:763.50px;width:2115.00px;height:1.00px;background:#e9ebed;"></div>
<div class="r" style="left:5px;top:736.10px;width:15px;height:15px;border-radius:50%;background:#269a55;"></div>
<div class="t" style="left:30.70px;top:735.63px;font-size:17.8px;color:#17212b;letter-spacing:0px;transform:scaleY(1.05);transform-origin:0 15.07px;">1.1</div>
<div class="t" style="left:300.00px;top:735.63px;font-size:17.8px;color:#17212b;letter-spacing:0px;transform:scaleY(1.05);transform-origin:0 15.07px;">Walls</div>
<div class="t" style="left:826.00px;top:735.63px;font-size:17.8px;color:#17212b;letter-spacing:0px;transform:scaleY(1.05);transform-origin:0 15.07px;">Inspection_Internal fitout</div>
<div class="t" style="left:1069.00px;top:735.63px;font-size:17.8px;color:#17212b;letter-spacing:0px;transform:scaleY(1.05);transform-origin:0 15.07px;">I19</div>
<div class="t" style="left:1225.00px;top:735.63px;font-size:17.8px;color:#17212b;letter-spacing:0px;transform:scaleY(1.05);transform-origin:0 15.07px;">Inspection</div>
<div class="t" style="left:1449.00px;top:735.63px;font-size:17.8px;color:#17212b;letter-spacing:-0.35px;transform:scaleY(1.05);transform-origin:0 15.07px;">Stefan Lorenzen, Dalux ApS</div>
<div class="t" style="left:1836.00px;top:735.63px;font-size:17.8px;color:#17212b;letter-spacing:-0.3px;transform:scaleY(1.05);transform-origin:0 15.07px;">15 Sep 2020, 12:28</div>
<div class="t" style="left:2030.00px;top:735.63px;font-size:17.8px;color:#17212b;letter-spacing:-0.3px;transform:scaleY(1.05);transform-origin:0 15.07px;">Stefan Lorenzen</div>
<div class="r" style="left:0.00px;top:804.30px;width:2115.00px;height:1.00px;background:#e9ebed;"></div>
<div class="r" style="left:5px;top:776.90px;width:15px;height:15px;border-radius:50%;background:#269a55;"></div>
<div class="t" style="left:30.70px;top:776.43px;font-size:17.8px;color:#17212b;letter-spacing:0px;transform:scaleY(1.05);transform-origin:0 15.07px;">1.1</div>
<div class="t" style="left:300.00px;top:776.43px;font-size:17.8px;color:#17212b;letter-spacing:0px;transform:scaleY(1.05);transform-origin:0 15.07px;">Walls</div>
<div class="t" style="left:826.00px;top:776.43px;font-size:17.8px;color:#17212b;letter-spacing:0px;transform:scaleY(1.05);transform-origin:0 15.07px;">Inspection_Internal fitout</div>
<div class="t" style="left:1069.00px;top:776.43px;font-size:17.8px;color:#17212b;letter-spacing:0px;transform:scaleY(1.05);transform-origin:0 15.07px;">I18</div>
<div class="t" style="left:1225.00px;top:776.43px;font-size:17.8px;color:#17212b;letter-spacing:0px;transform:scaleY(1.05);transform-origin:0 15.07px;">Inspection</div>
<div class="t" style="left:1449.00px;top:776.43px;font-size:17.8px;color:#17212b;letter-spacing:-0.35px;transform:scaleY(1.05);transform-origin:0 15.07px;">Stefan Lorenzen, Dalux ApS</div>
<div class="t" style="left:1836.00px;top:776.43px;font-size:17.8px;color:#17212b;letter-spacing:-0.3px;transform:scaleY(1.05);transform-origin:0 15.07px;">15 Sep 2020, 12:28</div>
<div class="t" style="left:2030.00px;top:776.43px;font-size:17.8px;color:#17212b;letter-spacing:-0.3px;transform:scaleY(1.05);transform-origin:0 15.07px;">Stefan Lorenzen</div>
<div class="r" style="left:0.00px;top:845.10px;width:2115.00px;height:1.00px;background:#e9ebed;"></div>
<div class="r" style="left:5px;top:817.70px;width:15px;height:15px;border-radius:50%;background:#269a55;"></div>
<div class="t" style="left:30.70px;top:817.23px;font-size:17.8px;color:#17212b;letter-spacing:0px;transform:scaleY(1.05);transform-origin:0 15.07px;">1.1</div>
<div class="t" style="left:300.00px;top:817.23px;font-size:17.8px;color:#17212b;letter-spacing:0px;transform:scaleY(1.05);transform-origin:0 15.07px;">Walls</div>
<div class="t" style="left:826.00px;top:817.23px;font-size:17.8px;color:#17212b;letter-spacing:0px;transform:scaleY(1.05);transform-origin:0 15.07px;">Inspection_Internal fitout</div>
<div class="t" style="left:1069.00px;top:817.23px;font-size:17.8px;color:#17212b;letter-spacing:0px;transform:scaleY(1.05);transform-origin:0 15.07px;">I17</div>
<div class="t" style="left:1225.00px;top:817.23px;font-size:17.8px;color:#17212b;letter-spacing:0px;transform:scaleY(1.05);transform-origin:0 15.07px;">Inspection</div>
<div class="t" style="left:1449.00px;top:817.23px;font-size:17.8px;color:#17212b;letter-spacing:-0.35px;transform:scaleY(1.05);transform-origin:0 15.07px;">Stefan Lorenzen, Dalux ApS</div>
<div class="t" style="left:1836.00px;top:817.23px;font-size:17.8px;color:#17212b;letter-spacing:-0.3px;transform:scaleY(1.05);transform-origin:0 15.07px;">15 Sep 2020, 12:28</div>
<div class="t" style="left:2030.00px;top:817.23px;font-size:17.8px;color:#17212b;letter-spacing:-0.3px;transform:scaleY(1.05);transform-origin:0 15.07px;">Stefan Lorenzen</div>
<div class="r" style="left:0.00px;top:885.20px;width:2115.00px;height:1.00px;background:#e9ebed;"></div>
<div class="r" style="left:5px;top:857.80px;width:15px;height:15px;border-radius:50%;background:#269a55;"></div>
<div class="t" style="left:30.70px;top:857.33px;font-size:17.8px;color:#17212b;letter-spacing:0px;transform:scaleY(1.05);transform-origin:0 15.07px;">1.1</div>
<div class="t" style="left:300.00px;top:857.33px;font-size:17.8px;color:#17212b;letter-spacing:0px;transform:scaleY(1.05);transform-origin:0 15.07px;">Walls</div>
<div class="t" style="left:826.00px;top:857.33px;font-size:17.8px;color:#17212b;letter-spacing:0px;transform:scaleY(1.05);transform-origin:0 15.07px;">Inspection_Internal fitout</div>
<div class="t" style="left:1069.00px;top:857.33px;font-size:17.8px;color:#17212b;letter-spacing:0px;transform:scaleY(1.05);transform-origin:0 15.07px;">I16</div>
<div class="t" style="left:1225.00px;top:857.33px;font-size:17.8px;color:#17212b;letter-spacing:0px;transform:scaleY(1.05);transform-origin:0 15.07px;">Inspection</div>
<div class="t" style="left:1449.00px;top:857.33px;font-size:17.8px;color:#17212b;letter-spacing:-0.35px;transform:scaleY(1.05);transform-origin:0 15.07px;">Magnus Dahl Larsen, Dalux ApS</div>
<div class="t" style="left:1836.00px;top:857.33px;font-size:17.8px;color:#17212b;letter-spacing:-0.3px;transform:scaleY(1.05);transform-origin:0 15.07px;">14 Sep 2020, 13:53</div>
<div class="t" style="left:2030.00px;top:857.33px;font-size:17.8px;color:#17212b;letter-spacing:-0.3px;transform:scaleY(1.05);transform-origin:0 15.07px;">Magnus Dahl Larsen</div>
<div class="r" style="left:0.00px;top:926.20px;width:2115.00px;height:1.00px;background:#e9ebed;"></div>
<div class="r" style="left:5px;top:898.80px;width:15px;height:15px;border-radius:50%;background:#269a55;"></div>
<div class="t" style="left:30.70px;top:898.33px;font-size:17.8px;color:#17212b;letter-spacing:0px;transform:scaleY(1.05);transform-origin:0 15.07px;">1</div>
<div class="t" style="left:300.00px;top:898.33px;font-size:17.8px;color:#17212b;letter-spacing:0px;transform:scaleY(1.05);transform-origin:0 15.07px;">Tilsyn 1</div>
<svg class="r" style="left:693.00px;top:896.20px;" width="22" height="18" viewBox="0 0 22 18"><path d="M2.5 9 L8 14.5 L19 3.5" fill="none" stroke="#3a5464" stroke-width="2.6" stroke-linecap="round" stroke-linejoin="round" /></svg>
<div class="t" style="left:826.00px;top:898.33px;font-size:17.8px;color:#17212b;letter-spacing:0px;transform:scaleY(1.05);transform-origin:0 15.07px;">Tilsyn</div>
<div class="t" style="left:1069.00px;top:898.33px;font-size:17.8px;color:#17212b;letter-spacing:0px;transform:scaleY(1.05);transform-origin:0 15.07px;">Tsda1</div>
<div class="t" style="left:1225.00px;top:898.33px;font-size:17.8px;color:#17212b;letter-spacing:0px;transform:scaleY(1.05);transform-origin:0 15.07px;">Tilsyn</div>
<div class="t" style="left:1449.00px;top:898.33px;font-size:17.8px;color:#17212b;letter-spacing:-0.35px;transform:scaleY(1.05);transform-origin:0 15.07px;">Magnus Dahl Larsen, Dalux ApS</div>
<div class="t" style="left:1836.00px;top:898.33px;font-size:17.8px;color:#17212b;letter-spacing:-0.3px;transform:scaleY(1.05);transform-origin:0 15.07px;">9 Sep 2020, 09:45</div>
<div class="t" style="left:2030.00px;top:898.33px;font-size:17.8px;color:#17212b;letter-spacing:-0.3px;transform:scaleY(1.05);transform-origin:0 15.07px;">Magnus Dahl Larsen</div>
<div class="r" style="left:0.00px;top:966.00px;width:2115.00px;height:1.00px;background:#e9ebed;"></div>
<div class="r" style="left:5px;top:938.60px;width:15px;height:15px;border-radius:50%;background:#f9853a;"></div>
<div class="t" style="left:30.70px;top:938.13px;font-size:17.8px;color:#17212b;letter-spacing:0px;transform:scaleY(1.05);transform-origin:0 15.07px;">2.2</div>
<div class="t" style="left:300.00px;top:938.13px;font-size:17.8px;color:#17212b;letter-spacing:0px;transform:scaleY(1.05);transform-origin:0 15.07px;">Starter bars</div>
<div class="t" style="left:826.00px;top:938.13px;font-size:17.8px;color:#17212b;letter-spacing:0px;transform:scaleY(1.05);transform-origin:0 15.07px;">Inspection_Concrete pour</div>
<div class="t" style="left:1069.00px;top:938.13px;font-size:17.8px;color:#17212b;letter-spacing:0px;transform:scaleY(1.05);transform-origin:0 15.07px;">I13</div>
<div class="t" style="left:1225.00px;top:938.13px;font-size:17.8px;color:#17212b;letter-spacing:0px;transform:scaleY(1.05);transform-origin:0 15.07px;">Inspection</div>
<div class="t" style="left:1449.00px;top:938.13px;font-size:17.8px;color:#17212b;letter-spacing:-0.35px;transform:scaleY(1.05);transform-origin:0 15.07px;">Magnus Dahl Larsen, Dalux ApS</div>
<div class="t" style="left:1836.00px;top:938.13px;font-size:17.8px;color:#17212b;letter-spacing:-0.3px;transform:scaleY(1.05);transform-origin:0 15.07px;">8 Sep 2020, 13:01</div>
<div class="t" style="left:2030.00px;top:938.13px;font-size:17.8px;color:#17212b;letter-spacing:-0.3px;transform:scaleY(1.05);transform-origin:0 15.07px;">Magnus Dahl Larsen</div>
<div class="r" style="left:0.00px;top:1007.40px;width:2115.00px;height:1.00px;background:#e9ebed;"></div>
<div class="r" style="left:5px;top:980.00px;width:15px;height:15px;border-radius:50%;background:#269a55;"></div>
<div class="t" style="left:30.70px;top:979.53px;font-size:17.8px;color:#17212b;letter-spacing:0px;transform:scaleY(1.05);transform-origin:0 15.07px;">1.1</div>
<div class="t" style="left:300.00px;top:979.53px;font-size:17.8px;color:#17212b;letter-spacing:0px;transform:scaleY(1.05);transform-origin:0 15.07px;">Formwork setout</div>
<svg class="r" style="left:693.00px;top:977.40px;" width="22" height="18" viewBox="0 0 22 18"><path d="M2.5 9 L8 14.5 L19 3.5" fill="none" stroke="#3a5464" stroke-width="2.6" stroke-linecap="round" stroke-linejoin="round" /></svg>
<div class="t" style="left:826.00px;top:979.53px;font-size:17.8px;color:#17212b;letter-spacing:0px;transform:scaleY(1.05);transform-origin:0 15.07px;">Inspection_Concrete pour</div>
<div class="t" style="left:1069.00px;top:979.53px;font-size:17.8px;color:#17212b;letter-spacing:0px;transform:scaleY(1.05);transform-origin:0 15.07px;">I-CP_10</div>
<div class="t" style="left:1225.00px;top:979.53px;font-size:17.8px;color:#17212b;letter-spacing:0px;transform:scaleY(1.05);transform-origin:0 15.07px;">Inspection_Concrete pour</div>
<div class="t" style="left:1449.00px;top:979.53px;font-size:17.8px;color:#17212b;letter-spacing:-0.35px;transform:scaleY(1.05);transform-origin:0 15.07px;">Stefan Lorenzen, Dalux ApS</div>
<div class="t" style="left:1836.00px;top:979.53px;font-size:17.8px;color:#17212b;letter-spacing:-0.3px;transform:scaleY(1.05);transform-origin:0 15.07px;">8 Sep 2020, 09:52</div>
<div class="t" style="left:2030.00px;top:979.53px;font-size:17.8px;color:#17212b;letter-spacing:-0.3px;transform:scaleY(1.05);transform-origin:0 15.07px;">Stefan Lorenzen</div>
<div class="r" style="left:0.00px;top:1048.20px;width:2115.00px;height:1.00px;background:#e9ebed;"></div>
<div class="r" style="left:5px;top:1020.80px;width:15px;height:15px;border-radius:50%;background:#269a55;"></div>
<div class="t" style="left:30.70px;top:1020.33px;font-size:17.8px;color:#17212b;letter-spacing:0px;transform:scaleY(1.05);transform-origin:0 15.07px;">1.2</div>
<div class="t" style="left:300.00px;top:1020.33px;font-size:17.8px;color:#17212b;letter-spacing:0px;transform:scaleY(1.05);transform-origin:0 15.07px;">Formwork Certificate</div>
<svg class="r" style="left:693.00px;top:1018.20px;" width="22" height="18" viewBox="0 0 22 18"><path d="M2.5 9 L8 14.5 L19 3.5" fill="none" stroke="#3a5464" stroke-width="2.6" stroke-linecap="round" stroke-linejoin="round" /></svg>
<div class="t" style="left:826.00px;top:1020.33px;font-size:17.8px;color:#17212b;letter-spacing:0px;transform:scaleY(1.05);transform-origin:0 15.07px;">Inspection_Concrete pour</div>
<div class="t" style="left:1069.00px;top:1020.33px;font-size:17.8px;color:#17212b;letter-spacing:0px;transform:scaleY(1.05);transform-origin:0 15.07px;">I-CP_9</div>
<div class="t" style="left:1225.00px;top:1020.33px;font-size:17.8px;color:#17212b;letter-spacing:0px;transform:scaleY(1.05);transform-origin:0 15.07px;">Inspection_Concrete pour</div>
<div class="t" style="left:1449.00px;top:1020.33px;font-size:17.8px;color:#17212b;letter-spacing:-0.35px;transform:scaleY(1.05);transform-origin:0 15.07px;">Magnus Dahl Larsen, Dalux ApS</div>
<div class="t" style="left:1836.00px;top:1020.33px;font-size:17.8px;color:#17212b;letter-spacing:-0.3px;transform:scaleY(1.05);transform-origin:0 15.07px;">3 Sep 2020, 11:39</div>
<div class="t" style="left:2030.00px;top:1020.33px;font-size:17.8px;color:#17212b;letter-spacing:-0.3px;transform:scaleY(1.05);transform-origin:0 15.07px;">Magnus Dahl Larsen</div>
<div class="r" style="left:0.00px;top:1089.40px;width:2115.00px;height:1.00px;background:#e9ebed;"></div>
<div class="r" style="left:5px;top:1062.00px;width:15px;height:15px;border-radius:50%;background:#f9853a;"></div>
<div class="t" style="left:30.70px;top:1061.53px;font-size:17.8px;color:#17212b;letter-spacing:0px;transform:scaleY(1.05);transform-origin:0 15.07px;">1.2</div>
<div class="t" style="left:300.00px;top:1061.53px;font-size:17.8px;color:#17212b;letter-spacing:0px;transform:scaleY(1.05);transform-origin:0 15.07px;">Control of materials and products delivered a...</div>
<svg class="r" style="left:693.00px;top:1059.40px;" width="22" height="18" viewBox="0 0 22 18"><path d="M2.5 9 L8 14.5 L19 3.5" fill="none" stroke="#3a5464" stroke-width="2.6" stroke-linecap="round" stroke-linejoin="round" /></svg>
<div class="t" style="left:826.00px;top:1061.53px;font-size:17.8px;color:#17212b;letter-spacing:0px;transform:scaleY(1.05);transform-origin:0 15.07px;">Inspection_Internal fitout</div>
<div class="t" style="left:1069.00px;top:1061.53px;font-size:17.8px;color:#17212b;letter-spacing:0px;transform:scaleY(1.05);transform-origin:0 15.07px;">SI3</div>
<div class="t" style="left:1225.00px;top:1061.53px;font-size:17.8px;color:#17212b;letter-spacing:0px;transform:scaleY(1.05);transform-origin:0 15.07px;">Site inspection</div>
<div class="t" style="left:1449.00px;top:1061.53px;font-size:17.8px;color:#17212b;letter-spacing:-0.35px;transform:scaleY(1.05);transform-origin:0 15.07px;">Stefan Lorenzen, Dalux ApS</div>
<div class="t" style="left:1836.00px;top:1061.53px;font-size:17.8px;color:#17212b;letter-spacing:-0.3px;transform:scaleY(1.05);transform-origin:0 15.07px;">3 Sep 2020, 10:31</div>
<div class="t" style="left:2030.00px;top:1061.53px;font-size:17.8px;color:#17212b;letter-spacing:-0.3px;transform:scaleY(1.05);transform-origin:0 15.07px;">Stefan Lorenzen</div>
<div class="r" style="left:0.00px;top:1130.40px;width:2115.00px;height:1.00px;background:#e9ebed;"></div>
<div class="r" style="left:5px;top:1103.00px;width:15px;height:15px;border-radius:50%;background:#f9853a;"></div>
<div class="t" style="left:30.70px;top:1102.53px;font-size:17.8px;color:#17212b;letter-spacing:0px;transform:scaleY(1.05);transform-origin:0 15.07px;">1.2</div>
<div class="t" style="left:300.00px;top:1102.53px;font-size:17.8px;color:#17212b;letter-spacing:0px;transform:scaleY(1.05);transform-origin:0 15.07px;">Control of materials and products delivered a...</div>
<svg class="r" style="left:693.00px;top:1100.40px;" width="22" height="18" viewBox="0 0 22 18"><path d="M2.5 9 L8 14.5 L19 3.5" fill="none" stroke="#3a5464" stroke-width="2.6" stroke-linecap="round" stroke-linejoin="round" /></svg>
<div class="t" style="left:826.00px;top:1102.53px;font-size:17.8px;color:#17212b;letter-spacing:0px;transform:scaleY(1.05);transform-origin:0 15.07px;">Inspection_Internal fitout</div>
<div class="t" style="left:1069.00px;top:1102.53px;font-size:17.8px;color:#17212b;letter-spacing:0px;transform:scaleY(1.05);transform-origin:0 15.07px;">SI2</div>
<div class="t" style="left:1225.00px;top:1102.53px;font-size:17.8px;color:#17212b;letter-spacing:0px;transform:scaleY(1.05);transform-origin:0 15.07px;">Site inspection</div>
<div class="t" style="left:1449.00px;top:1102.53px;font-size:17.8px;color:#17212b;letter-spacing:-0.35px;transform:scaleY(1.05);transform-origin:0 15.07px;">Stefan Lorenzen, Dalux ApS</div>
<div class="t" style="left:1836.00px;top:1102.53px;font-size:17.8px;color:#17212b;letter-spacing:-0.3px;transform:scaleY(1.05);transform-origin:0 15.07px;">3 Sep 2020, 10:29</div>
<div class="t" style="left:2030.00px;top:1102.53px;font-size:17.8px;color:#17212b;letter-spacing:-0.3px;transform:scaleY(1.05);transform-origin:0 15.07px;">Stefan Lorenzen</div>
</div>
<div class="r" style="left:2549.00px;top:288.00px;width:15.00px;height:1156.00px;background:#ffffff;"></div>
<div class="r" style="left:2551.00px;top:341.00px;width:11.00px;height:324.00px;background:#d0d0d0;border-radius:6px;"></div>
<div class="r" style="left:436.00px;top:1431.00px;width:585.00px;height:11.00px;background:#d0d0d0;border-radius:6px;"></div>
<div class="r" style="left:4px;top:4px;width:2560px;height:1440px;background:rgba(0,0,0,0.2);"></div>
<div class="r" style="left:370px;top:552px;width:1913px;height:625px;background:#fff;border-radius:10px;box-shadow:0 30px 80px rgba(0,0,0,0.42), 0 4px 16px rgba(0,0,0,0.15);"></div>
<div class="t" style="left:385.50px;top:563.08px;font-size:27.2px;color:#17212b;transform:scaleY(1.05);transform-origin:0 23.02px;-webkit-text-stroke:0.45px #17212b;">Print</div>
<svg class="r" style="left:2248.00px;top:567.00px;" width="20" height="20" viewBox="0 0 20 20"><path d="M1.8 1.8 L18.2 18.2 M18.2 1.8 L1.8 18.2" fill="none" stroke="#3a5464" stroke-width="2.3" stroke-linecap="round" stroke-linejoin="round" stroke-linecap="butt"/></svg>
<div class="r" style="left:393.6px;top:610.8px;width:20.5px;height:20.5px;border-radius:50%;border:1px solid #8396a3;"></div>
<div class="t" style="left:428.00px;top:613.60px;font-size:17.6px;color:#28333d;transform:scaleY(1.05);transform-origin:0 14.90px;">Entire list</div>
<div class="r" style="left:394px;top:652.8px;width:22.8px;height:22.8px;border-radius:50%;box-sizing:border-box;border:6.4px solid #3f5465;background:#fff;"></div>
<div class="t" style="left:428.00px;top:656.70px;font-size:17.6px;color:#28333d;transform:scaleY(1.05);transform-origin:0 14.90px;">Selected registrations (4)</div>
<div class="r" style="left:1889.00px;top:695.00px;width:275.00px;height:410.00px;background:#d3ebae;border-radius:6px;"></div>
<div class="t" style="left:126.30px;width:1000px;text-align:center;top:712.50px;font-size:17.6px;color:#28333d;transform:scaleY(1.05);transform-origin:0 14.90px;">Single report</div>
<svg class="r" style="left:502.00px;top:744.70px;" width="249" height="348" viewBox="0 0 249 348"><rect x="1" y="1" width="247" height="346" rx="7" fill="#fff" stroke="#aab4bb" stroke-width="2"/><rect x="11.4" y="11.6" width="68.6" height="12.2" rx="0" fill="#ebeef0" /><rect x="155.3" y="11.6" width="81.3" height="24.7" rx="0" fill="#ebeef0" /><rect x="11.4" y="56.4" width="225.2" height="14.7" rx="0" fill="#d8dde1" /><rect x="11.4" y="81.65" width="37.4" height="4.5" rx="0" fill="#d8dde1" /><rect x="61.5" y="81.65" width="175.1" height="4.5" rx="0" fill="#d8dde1" /><rect x="11.4" y="94.05" width="37.4" height="4.5" rx="0" fill="#d8dde1" /><rect x="61.5" y="94.05" width="175.1" height="4.5" rx="0" fill="#d8dde1" /><rect x="11.4" y="106.55" width="37.4" height="4.5" rx="0" fill="#d8dde1" /><rect x="61.5" y="106.55" width="175.1" height="4.5" rx="0" fill="#d8dde1" /><rect x="11.4" y="119.25" width="37.4" height="4.5" rx="0" fill="#d8dde1" /><rect x="61.5" y="119.25" width="175.1" height="4.5" rx="0" fill="#d8dde1" /><rect x="11.4" y="134" width="90.1" height="64.5" rx="0" fill="#ebeef0" /><rect x="32.0" y="147.79999999999998" width="48.599999999999994" height="37.3" rx="3" fill="none" stroke="#b5bcc2" stroke-width="3.2"/><path d="M38.14 178.04 L46.31 167.81 L53.12 174.97 L63.11 163.72 L74.01 178.04 Z" fill="#b5bcc2"/><rect x="111.4" y="134" width="90.1" height="64.5" rx="0" fill="#ebeef0" /><rect x="132.0" y="147.79999999999998" width="48.599999999999994" height="37.3" rx="3" fill="none" stroke="#b5bcc2" stroke-width="3.2"/><path d="M138.14 178.04 L146.31 167.81 L153.12 174.97 L163.11 163.72 L174.01 178.04 Z" fill="#b5bcc2"/><rect x="11.4" y="209.05" width="37.4" height="4.5" rx="0" fill="#d8dde1" /><rect x="61.5" y="209.05" width="100" height="4.5" rx="0" fill="#d8dde1" /><rect x="11.4" y="221.55" width="37.4" height="4.5" rx="0" fill="#d8dde1" /><rect x="61.5" y="221.55" width="100" height="4.5" rx="0" fill="#d8dde1" /><rect x="11.4" y="233.95" width="37.4" height="4.5" rx="0" fill="#d8dde1" /><rect x="61.5" y="233.95" width="100" height="4.5" rx="0" fill="#d8dde1" /><rect x="11.4" y="246.45" width="37.4" height="4.5" rx="0" fill="#d8dde1" /><rect x="61.5" y="246.45" width="100" height="4.5" rx="0" fill="#d8dde1" /><rect x="194.1" y="209" width="42.5" height="9.9" rx="0" fill="#87949c" /><rect x="194.1" y="221.8" width="42.5" height="9.3" rx="0" fill="#b5bcc2" /><rect x="194.1" y="234.5" width="42.5" height="9.4" rx="0" fill="#d8dde1" /><rect x="11.4" y="261.4" width="90.1" height="64.9" rx="0" fill="#ebeef0" /><rect x="32.0" y="275.20000000000005" width="48.599999999999994" height="37.3" rx="3" fill="none" stroke="#b5bcc2" stroke-width="3.2"/><path d="M38.14 305.44 L46.31 295.21 L53.12 302.38 L63.11 291.12 L74.01 305.44 Z" fill="#b5bcc2"/></svg>
<div class="t" style="left:406.30px;width:1000px;text-align:center;top:712.50px;font-size:17.6px;color:#28333d;transform:scaleY(1.05);transform-origin:0 14.90px;">Worker report</div>
<svg class="r" style="left:782.00px;top:744.70px;" width="249" height="348" viewBox="0 0 249 348"><rect x="1" y="1" width="247" height="346" rx="7" fill="#fff" stroke="#aab4bb" stroke-width="2"/><defs><linearGradient id="cone" x1="0" x2="1" y1="0" y2="0"><stop offset="0" stop-color="#b5bcc2"/><stop offset="1" stop-color="#ffffff"/></linearGradient></defs><rect x="11.4" y="11.6" width="68.6" height="12.2" rx="0" fill="#ebeef0" /><rect x="155.3" y="11.6" width="81.3" height="24.7" rx="0" fill="#ebeef0" /><rect x="12.6" y="57.8" width="225.2" height="14.7" rx="2" fill="#b5bcc2" /><rect x="11.8" y="82.4" width="51" height="50.5" rx="0" fill="#ebeef0" /><rect x="21.8" y="94.8" width="32.4" height="25.9" rx="3" fill="none" stroke="#b5bcc2" stroke-width="2.6"/><path d="M26.08 115.67 L31.44 108.68 L35.91 113.57 L42.47 105.89 L49.62 115.67 Z" fill="#b5bcc2"/><rect x="73.4" y="83.1" width="49.4" height="49" rx="0" fill="none" stroke="#b5bcc2" stroke-width="1.4"/><path d="M97.8 122.1 C92.8 114.3 88.3 108.8 88.3 103.3 A9.5 9.5 0 0 1 107.3 103.3 C107.3 108.8 102.8 114.3 97.8 122.1 Z" fill="#b5bcc2"/><circle cx="97.8" cy="103.0" r="3.6" fill="#fff"/><rect x="133.4" y="83.1" width="49.4" height="49" rx="0" fill="none" stroke="#b5bcc2" stroke-width="1.4"/><path d="M152.5 108.0 L170 98.0 V118.0 Z" fill="url(#cone)"/><circle cx="152.5" cy="108.0" r="6.3" fill="#b5bcc2"/><rect x="192.8" y="84.15" width="37.6" height="4.5" rx="1" fill="#b5bcc2" /><rect x="192.8" y="96.65" width="37.6" height="4.5" rx="1" fill="#b5bcc2" /><rect x="192.8" y="109.05" width="37.6" height="4.5" rx="1" fill="#b5bcc2" /><rect x="12.6" y="144.6" width="225.2" height="1.6" rx="0" fill="#ebeef0" /><rect x="11.8" y="156.10000000000002" width="51" height="50.5" rx="0" fill="#ebeef0" /><rect x="21.8" y="168.5" width="32.4" height="25.9" rx="3" fill="none" stroke="#b5bcc2" stroke-width="2.6"/><path d="M26.08 189.37 L31.44 182.38 L35.91 187.27 L42.47 179.59 L49.62 189.37 Z" fill="#b5bcc2"/><rect x="73.4" y="156.8" width="49.4" height="49" rx="0" fill="none" stroke="#b5bcc2" stroke-width="1.4"/><path d="M97.8 195.8 C92.8 188.0 88.3 182.5 88.3 177.0 A9.5 9.5 0 0 1 107.3 177.0 C107.3 182.5 102.8 188.0 97.8 195.8 Z" fill="#b5bcc2"/><circle cx="97.8" cy="176.7" r="3.6" fill="#fff"/><rect x="133.4" y="156.8" width="49.4" height="49" rx="0" fill="none" stroke="#b5bcc2" stroke-width="1.4"/><path d="M152.5 181.7 L170 171.7 V191.7 Z" fill="url(#cone)"/><circle cx="152.5" cy="181.7" r="6.3" fill="#b5bcc2"/><rect x="192.8" y="157.85000000000002" width="37.6" height="4.5" rx="1" fill="#b5bcc2" /><rect x="192.8" y="170.35000000000002" width="37.6" height="4.5" rx="1" fill="#b5bcc2" /><rect x="192.8" y="182.75" width="37.6" height="4.5" rx="1" fill="#b5bcc2" /><rect x="12.6" y="218.3" width="225.2" height="1.6" rx="0" fill="#ebeef0" /><rect x="11.8" y="229.8" width="51" height="50.5" rx="0" fill="#ebeef0" /><rect x="21.8" y="242.20000000000002" width="32.4" height="25.9" rx="3" fill="none" stroke="#b5bcc2" stroke-width="2.6"/><path d="M26.08 263.07 L31.44 256.08 L35.91 260.98 L42.47 253.29 L49.62 263.07 Z" fill="#b5bcc2"/><rect x="73.4" y="230.5" width="49.4" height="49" rx="0" fill="none" stroke="#b5bcc2" stroke-width="1.4"/><path d="M97.8 269.5 C92.8 261.7 88.3 256.2 88.3 250.7 A9.5 9.5 0 0 1 107.3 250.7 C107.3 256.2 102.8 261.7 97.8 269.5 Z" fill="#b5bcc2"/><circle cx="97.8" cy="250.39999999999998" r="3.6" fill="#fff"/><rect x="133.4" y="230.5" width="49.4" height="49" rx="0" fill="none" stroke="#b5bcc2" stroke-width="1.4"/><path d="M152.5 255.4 L170 245.4 V265.4 Z" fill="url(#cone)"/><circle cx="152.5" cy="255.4" r="6.3" fill="#b5bcc2"/><rect x="192.8" y="231.55" width="37.6" height="4.5" rx="1" fill="#b5bcc2" /><rect x="192.8" y="244.05" width="37.6" height="4.5" rx="1" fill="#b5bcc2" /><rect x="192.8" y="256.45" width="37.6" height="4.5" rx="1" fill="#b5bcc2" /><rect x="12.6" y="292.0" width="225.2" height="1.6" rx="0" fill="#ebeef0" /></svg>
<div class="t" style="left:686.30px;width:1000px;text-align:center;top:712.50px;font-size:17.6px;color:#28333d;transform:scaleY(1.05);transform-origin:0 14.90px;">Overview drawing</div>
<svg class="r" style="left:1062.00px;top:744.70px;" width="249" height="348" viewBox="0 0 249 348"><rect x="1" y="1" width="247" height="346" rx="7" fill="#fff" stroke="#aab4bb" stroke-width="2"/><rect x="11.4" y="11.6" width="68.6" height="12.2" rx="0" fill="#ebeef0" /><rect x="155.3" y="11.6" width="81.3" height="24.7" rx="0" fill="#ebeef0" /><path d="M36.6 55 H211.6 V317.5 H36.6 Z M46.6 65 V307.5 H201.6 V65 Z" fill="#b5bcc2" fill-rule="evenodd"/><rect x="58.1" y="55" width="28.9" height="10" rx="0" fill="#fff" stroke="#b5bcc2" stroke-width="0.9"/><rect x="58.1" y="59.55" width="28.9" height="0.9" rx="0" fill="#b5bcc2" /><rect x="121" y="55" width="28.900000000000006" height="10" rx="0" fill="#fff" stroke="#b5bcc2" stroke-width="0.9"/><rect x="121" y="59.55" width="28.900000000000006" height="0.9" rx="0" fill="#b5bcc2" /><rect x="36.6" y="83.9" width="10" height="29.099999999999994" rx="0" fill="#fff" stroke="#b5bcc2" stroke-width="0.9"/><rect x="41.15" y="83.9" width="0.9" height="29.099999999999994" rx="0" fill="#b5bcc2" /><rect x="36.6" y="185" width="10" height="29" rx="0" fill="#fff" stroke="#b5bcc2" stroke-width="0.9"/><rect x="41.15" y="185" width="0.9" height="29" rx="0" fill="#b5bcc2" /><rect x="36.6" y="258.9" width="10" height="28.900000000000034" rx="0" fill="#fff" stroke="#b5bcc2" stroke-width="0.9"/><rect x="41.15" y="258.9" width="0.9" height="28.900000000000034" rx="0" fill="#b5bcc2" /><rect x="201.6" y="241" width="10" height="29.2" rx="0" fill="#fff" stroke="#b5bcc2" stroke-width="0.9"/><rect x="206.15" y="241" width="0.9" height="29.2" rx="0" fill="#b5bcc2" /><rect x="201.1" y="139.6" width="11" height="32" rx="0" fill="#fff" /><path d="M201.6 139.6 C219.6 139.6 225.6 143 229.6 147 L212.1 171.6" fill="none" stroke="#b5bcc2" stroke-width="0.9"/><rect x="116.8" y="139.6" width="4.2" height="168" rx="0" fill="#b5bcc2" /><rect x="46.6" y="139.6" width="10.8" height="4.2" rx="0" fill="#b5bcc2" /><rect x="88.4" y="139.6" width="28.4" height="4.2" rx="0" fill="#b5bcc2" /><path d="M57.4 141.7 L84 122.5 C87 125 88.4 132 88.4 139.6" fill="none" stroke="#b5bcc2" stroke-width="0.9"/><rect x="46.6" y="213.8" width="70.2" height="4.2" rx="0" fill="#b5bcc2" /><rect x="121" y="200.8" width="25" height="4.2" rx="0" fill="#b5bcc2" /><rect x="176" y="200.8" width="25.599999999999994" height="4.2" rx="0" fill="#b5bcc2" /><path d="M146 202.9 L173 183 C176 186 177.5 193 176 200.8" fill="none" stroke="#b5bcc2" stroke-width="0.9"/><rect x="115.8" y="234" width="6.2" height="31" rx="0" fill="#fff" /><path d="M118.9 234 L99 260 C102 264 110 265.5 118.9 265" fill="none" stroke="#b5bcc2" stroke-width="0.9"/><rect x="129.5" y="139" width="34.5" height="17.599999999999994" rx="8.799999999999997" fill="#87949c" /><rect x="53.9" y="157.8" width="35.1" height="17.5" rx="8.75" fill="#87949c" /><rect x="74.3" y="283" width="34.5" height="17.5" rx="8.75" fill="#87949c" /></svg>
<div class="t" style="left:966.30px;width:1000px;text-align:center;top:712.50px;font-size:17.6px;color:#28333d;transform:scaleY(1.05);transform-origin:0 14.90px;">Status report</div>
<svg class="r" style="left:1342.00px;top:744.70px;" width="249" height="348" viewBox="0 0 249 348"><rect x="1" y="1" width="247" height="346" rx="7" fill="#b5bcc2" stroke="#aab4bb" stroke-width="2"/><rect x="2.5" y="2.5" width="244" height="343" rx="5.5" fill="none" stroke="#c9d0d4" stroke-width="1"/><rect x="3" y="86.1" width="243" height="175.3" rx="0" fill="#fff" /><rect x="11.5" y="99.2" width="68.8" height="11.8" rx="0" fill="#ebeef0" /><rect x="155.4" y="99.2" width="80.7" height="24.6" rx="0" fill="#ebeef0" /><rect x="11.5" y="134" width="224.6" height="15" rx="0" fill="#d8dde1" /><rect x="11.5" y="154.0" width="24.9" height="4.8" rx="1.5" fill="#d8dde1" /><rect x="49" y="154.0" width="25" height="4.8" rx="1.5" fill="#d8dde1" /><rect x="86.5" y="154.0" width="25.0" height="4.8" rx="1.5" fill="#d8dde1" /><rect x="174" y="154.0" width="25" height="4.8" rx="1.5" fill="#d8dde1" /><rect x="211.4" y="154.0" width="24.900000000000006" height="4.8" rx="1.5" fill="#d8dde1" /><rect x="124.2" y="154.0" width="37.2" height="24.7" rx="0" fill="#ebeef0" /><rect x="11.5" y="184.4" width="224.6" height="2" rx="0" fill="#ebeef0" /><rect x="11.5" y="191.4" width="24.9" height="4.8" rx="1.5" fill="#d8dde1" /><rect x="49" y="191.4" width="25" height="4.8" rx="1.5" fill="#d8dde1" /><rect x="86.5" y="191.4" width="25.0" height="4.8" rx="1.5" fill="#d8dde1" /><rect x="174" y="191.4" width="25" height="4.8" rx="1.5" fill="#d8dde1" /><rect x="211.4" y="191.4" width="24.900000000000006" height="4.8" rx="1.5" fill="#d8dde1" /><rect x="124.2" y="191.4" width="37.2" height="24.7" rx="0" fill="#ebeef0" /><rect x="11.5" y="221.8" width="224.6" height="2" rx="0" fill="#ebeef0" /><rect x="11.5" y="228.8" width="24.9" height="4.8" rx="1.5" fill="#d8dde1" /><rect x="49" y="228.8" width="25" height="4.8" rx="1.5" fill="#d8dde1" /><rect x="86.5" y="228.8" width="25.0" height="4.8" rx="1.5" fill="#d8dde1" /><rect x="174" y="228.8" width="25" height="4.8" rx="1.5" fill="#d8dde1" /><rect x="211.4" y="228.8" width="24.900000000000006" height="4.8" rx="1.5" fill="#d8dde1" /><rect x="124.2" y="228.8" width="37.2" height="24.7" rx="0" fill="#ebeef0" /></svg>
<div class="t" style="left:1246.30px;width:1000px;text-align:center;top:712.50px;font-size:17.6px;color:#28333d;transform:scaleY(1.05);transform-origin:0 14.90px;">Inspection plan</div>
<svg class="r" style="left:1622.00px;top:744.70px;" width="249" height="348" viewBox="0 0 249 348"><rect x="1" y="1" width="247" height="346" rx="7" fill="#fff" stroke="#aab4bb" stroke-width="2"/><rect x="11.4" y="11.6" width="68.6" height="12.2" rx="0" fill="#ebeef0" /><rect x="155.3" y="11.6" width="81.3" height="24.7" rx="0" fill="#ebeef0" /><rect x="11.4" y="56.5" width="225.1" height="14.6" rx="0" fill="#d8dde1" /><rect x="11.4" y="77.1" width="6" height="4.8" rx="1.5" fill="#d8dde1" /><rect x="24.2" y="77.1" width="37.3" height="4.8" rx="1.5" fill="#d8dde1" /><circle cx="78.5" cy="79.5" r="2.3" fill="#d8dde1"/><rect x="81.4" y="77.1" width="37.5" height="4.8" rx="1.5" fill="#d8dde1" /><circle cx="78.5" cy="91.9" r="2.3" fill="#87949c"/><rect x="81.4" y="89.5" width="37.5" height="4.8" rx="1.5" fill="#d8dde1" /><rect x="131.4" y="77.1" width="37.4" height="4.8" rx="1.5" fill="#d8dde1" /><circle cx="209.2" cy="91.2" r="11" fill="none" stroke="#d8dde1" stroke-width="8.5"/><path d="M209.20 80.20 A11 11 0 0 1 220.20 91.20" fill="none" stroke="#87949c" stroke-width="8.5"/><rect x="11.4" y="112.4" width="225.1" height="1.6" rx="0" fill="#ebeef0" /><rect x="11.4" y="119.6" width="6" height="4.8" rx="1.5" fill="#d8dde1" /><rect x="24.2" y="119.6" width="37.3" height="4.8" rx="1.5" fill="#d8dde1" /><circle cx="78.5" cy="122.0" r="2.3" fill="#d8dde1"/><rect x="81.4" y="119.6" width="37.5" height="4.8" rx="1.5" fill="#d8dde1" /><circle cx="78.5" cy="134.4" r="2.3" fill="#87949c"/><rect x="81.4" y="132.0" width="37.5" height="4.8" rx="1.5" fill="#d8dde1" /><rect x="131.4" y="119.6" width="37.4" height="4.8" rx="1.5" fill="#d8dde1" /><circle cx="209.2" cy="133.7" r="11" fill="none" stroke="#d8dde1" stroke-width="8.5"/><path d="M209.20 122.70 A11 11 0 0 1 220.20 133.70" fill="none" stroke="#87949c" stroke-width="8.5"/><rect x="11.4" y="154.9" width="225.1" height="1.6" rx="0" fill="#ebeef0" /><rect x="11.4" y="162.1" width="6" height="4.8" rx="1.5" fill="#d8dde1" /><rect x="24.2" y="162.1" width="37.3" height="4.8" rx="1.5" fill="#d8dde1" /><circle cx="78.5" cy="164.5" r="2.3" fill="#d8dde1"/><rect x="81.4" y="162.1" width="37.5" height="4.8" rx="1.5" fill="#d8dde1" /><circle cx="78.5" cy="176.9" r="2.3" fill="#87949c"/><rect x="81.4" y="174.5" width="37.5" height="4.8" rx="1.5" fill="#d8dde1" /><rect x="131.4" y="162.1" width="37.4" height="4.8" rx="1.5" fill="#d8dde1" /><circle cx="209.2" cy="176.2" r="11" fill="none" stroke="#d8dde1" stroke-width="8.5"/><path d="M209.20 165.20 A11 11 0 0 1 209.20 187.20" fill="none" stroke="#87949c" stroke-width="8.5"/><rect x="11.4" y="197.4" width="225.1" height="1.6" rx="0" fill="#ebeef0" /><rect x="11.4" y="204.6" width="6" height="4.8" rx="1.5" fill="#d8dde1" /><rect x="24.2" y="204.6" width="37.3" height="4.8" rx="1.5" fill="#d8dde1" /><circle cx="78.5" cy="207.0" r="2.3" fill="#d8dde1"/><rect x="81.4" y="204.6" width="37.5" height="4.8" rx="1.5" fill="#d8dde1" /><circle cx="78.5" cy="219.4" r="2.3" fill="#87949c"/><rect x="81.4" y="217.0" width="37.5" height="4.8" rx="1.5" fill="#d8dde1" /><circle cx="78.5" cy="231.8" r="2.3" fill="#87949c"/><rect x="81.4" y="229.4" width="37.5" height="4.8" rx="1.5" fill="#d8dde1" /><rect x="131.4" y="204.6" width="37.4" height="4.8" rx="1.5" fill="#d8dde1" /><circle cx="209.2" cy="218.7" r="11" fill="none" stroke="#d8dde1" stroke-width="8.5"/><path d="M209.20 207.70 A11 11 0 0 1 220.20 218.70" fill="none" stroke="#87949c" stroke-width="8.5"/><path d="M220.20 218.70 A11 11 0 0 1 209.20 229.70" fill="none" stroke="#b5bcc2" stroke-width="8.5"/><rect x="11.4" y="239.9" width="225.1" height="1.6" rx="0" fill="#ebeef0" /><rect x="11.4" y="247.1" width="6" height="4.8" rx="1.5" fill="#d8dde1" /><rect x="24.2" y="247.1" width="37.3" height="4.8" rx="1.5" fill="#d8dde1" /><circle cx="78.5" cy="249.5" r="2.3" fill="#d8dde1"/><rect x="81.4" y="247.1" width="37.5" height="4.8" rx="1.5" fill="#d8dde1" /><circle cx="78.5" cy="261.9" r="2.3" fill="#87949c"/><rect x="81.4" y="259.5" width="37.5" height="4.8" rx="1.5" fill="#d8dde1" /><rect x="131.4" y="247.1" width="37.4" height="4.8" rx="1.5" fill="#d8dde1" /><circle cx="209.2" cy="261.2" r="11" fill="none" stroke="#d8dde1" stroke-width="8.5"/><path d="M209.20 250.20 A11 11 0 0 1 209.20 272.20" fill="none" stroke="#87949c" stroke-width="8.5"/><rect x="11.4" y="282.4" width="225.1" height="1.6" rx="0" fill="#ebeef0" /></svg>
<div class="t" style="left:1526.30px;width:1000px;text-align:center;top:712.50px;font-size:17.6px;color:#28333d;transform:scaleY(1.05);transform-origin:0 14.90px;">Custom report</div>
<svg class="r" style="left:1902.00px;top:744.70px;" width="249" height="348" viewBox="0 0 249 348"><rect x="1" y="1" width="247" height="346" rx="7" fill="#fff" stroke="#aab4bb" stroke-width="2"/><rect x="11.4" y="11.6" width="68.6" height="12.2" rx="0" fill="#ebeef0" /><rect x="155.3" y="11.6" width="81.3" height="24.7" rx="0" fill="#ebeef0" /><rect x="48" y="97.8" width="149.7" height="149.5" rx="3" fill="#ebeef0" /><rect x="75.9" y="135.9" width="93.5" height="73.10000000000001" rx="12" fill="none" stroke="#b5bcc2" stroke-width="9.8"/><path d="M89.17 193.97 L104.24 174.98 L116.79 188.28 L135.20 167.39 L155.29 193.97 Z" fill="#b5bcc2"/><rect x="79.3" y="262.5" width="87.1" height="10" rx="0" fill="#ebeef0" /></svg>
<div class="r" style="left:1899px;top:1018px;width:253.5px;height:76.5px;background:#fff;border:1px solid #cfd6db;border-radius:4px;box-sizing:border-box;"></div>
<div class="t" style="left:1905.00px;top:1027.90px;font-size:17.6px;color:#28333d;transform:scaleY(1.05);transform-origin:0 14.90px;">Report template</div>
<div class="r" style="left:1905.5px;top:1050px;width:242.5px;height:38.6px;border:1.5px solid #455a69;border-radius:5px;box-sizing:border-box;background:#fff;"></div>
<div class="t" style="left:1916.50px;top:1061.60px;font-size:17.6px;color:#17212b;transform:scaleY(1.05);transform-origin:0 14.90px;">RFI</div>
<svg class="r" style="left:2110.00px;top:1060.00px;" width="22" height="16" viewBox="0 0 22 16"><path d="M3.5 4 L10.5 11 L17.5 4" fill="none" stroke="#3a5464" stroke-width="2.5" stroke-linecap="round" stroke-linejoin="round" /></svg>
<svg class="r" style="left:2103.00px;top:1078.00px;" width="32" height="34" viewBox="0 0 32 34"><path d="M12 4.5 C12 2.5 15 2.5 15 4.5 V14 C15 12.5 18 12.5 18 14 V15.5 C18 14 21 14 21 15.5 V17 C21 15.5 24 15.5 24 17 V24 C24 28 22 31 18 31 H14.5 C11.5 31 10 29.5 8 26.5 L4.5 20.5 C3.5 18.5 6 17 7.5 18.5 L10 21.5 C10.5 22 12 22 12 21 Z" fill="#fff" stroke="#111" stroke-width="1.4" stroke-linejoin="round"/><path d="M15 14 V21 M18 15.5 V21 M21 17 V21" stroke="#111" stroke-width="1.1"/></svg>
<div class="r" style="left:370.00px;top:1116.00px;width:1913.00px;height:1.20px;background:#dde3e8;"></div>
<div class="t" style="left:401.00px;top:1138.70px;font-size:17.6px;color:#3c5566;transform:scaleY(1.05);transform-origin:0 14.90px;-webkit-text-stroke:0.3px #3c5566;">Your prints</div>
<div class="r" style="left:1671px;top:1136px;width:22px;height:22px;box-sizing:border-box;border:1px solid #7d909d;border-radius:3px;"></div>
<div class="t" style="left:1704.80px;top:1138.70px;font-size:17.6px;color:#28333d;transform:scaleY(1.05);transform-origin:0 14.90px;">Notify me by email when the print is complete</div>
<div class="r" style="left:2087.3px;top:1127px;width:95.7px;height:39.3px;box-sizing:border-box;border:1.3px solid #33495a;border-radius:5px;"></div>
<div class="t" style="left:1635.20px;width:1000px;text-align:center;top:1138.70px;font-size:17.6px;color:#3b5262;transform:scaleY(1.05);transform-origin:0 14.90px;-webkit-text-stroke:0.55px #3b5262;">Cancel</div>
<div class="r" style="left:2193.20px;top:1127.00px;width:79.70px;height:39.30px;background:#8cc63f;border-radius:5px;"></div>
<div class="t" style="left:1733.00px;width:1000px;text-align:center;top:1138.70px;font-size:17.6px;color:#fff;transform:scaleY(1.05);transform-origin:0 14.90px;-webkit-text-stroke:0.55px #fff;">Print</div>
<div class="r" style="left:2520.00px;top:68.00px;width:44.00px;height:43.40px;background:#d9d9d9;"></div>
<svg class="r" style="left:2524.00px;top:72.00px;" width="34" height="34" viewBox="0 0 34 34"><circle cx="16" cy="16" r="14" fill="#c1d1b2"/><path d="M19 9.5 L12.5 16 L19 22.5 M12.5 16 H23" fill="none" stroke="#d9d9d9" stroke-width="3" stroke-linecap="round" stroke-linejoin="round" stroke-linecap="butt" stroke-linejoin="miter"/></svg>
<div class="r" style="left:4px;top:4px;width:2560px;height:1440px;box-sizing:border-box;border:1px solid rgba(255,255,255,0.12);"></div>
</body></html>
